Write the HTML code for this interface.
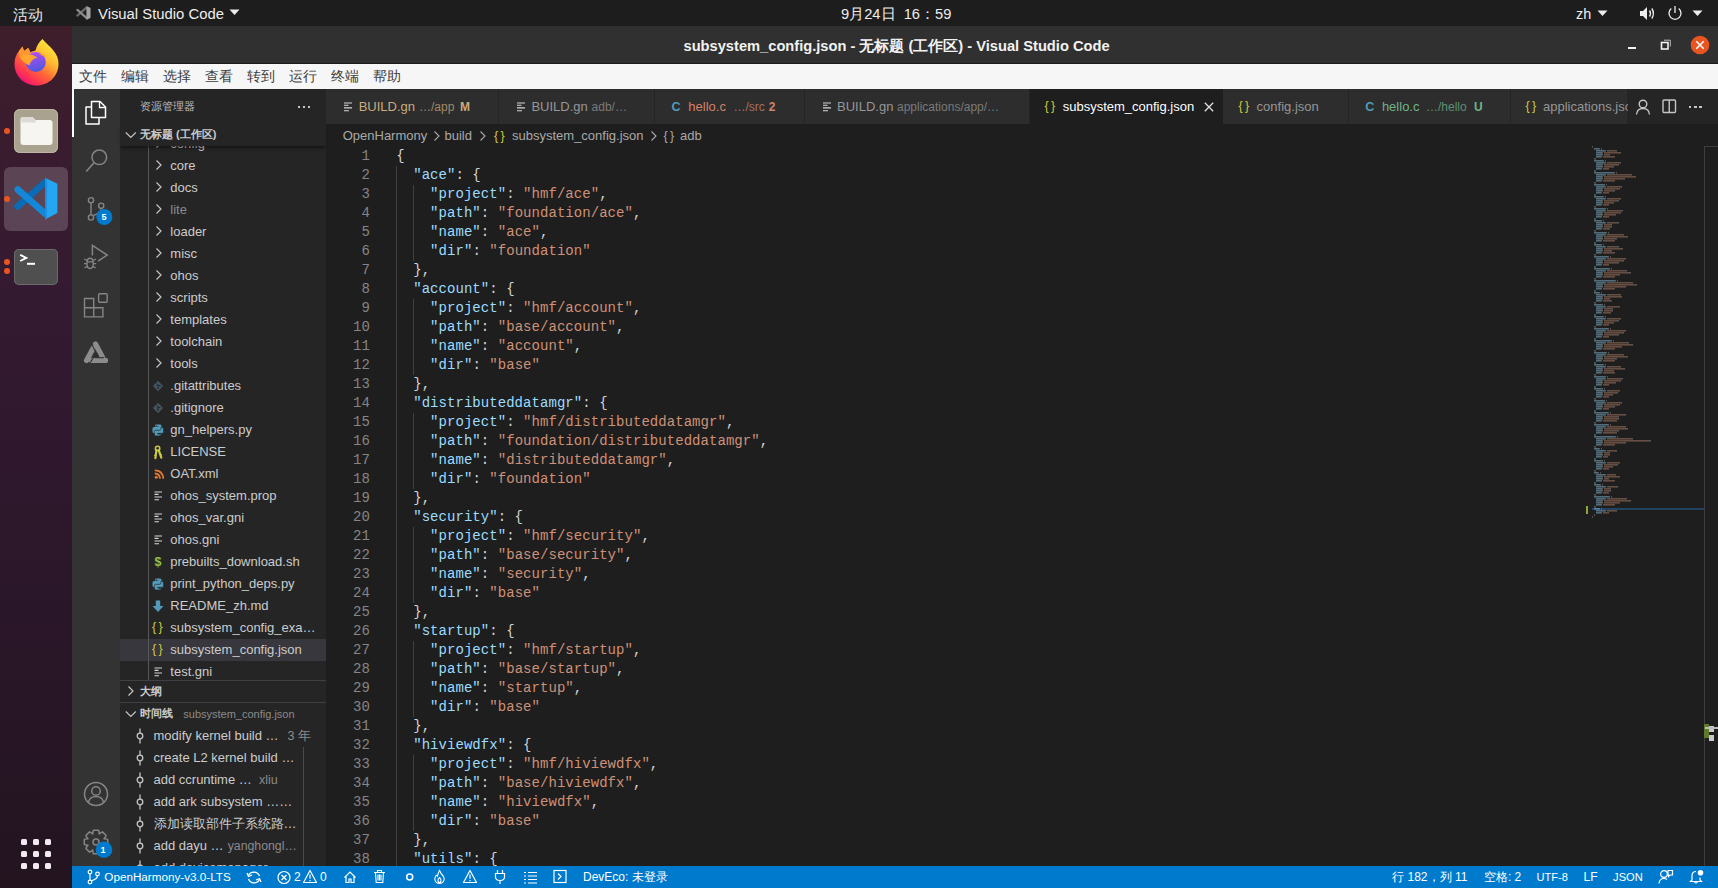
<!DOCTYPE html><html><head><meta charset="utf-8"><style>
*{margin:0;padding:0;box-sizing:border-box}
html,body{width:1718px;height:888px;overflow:hidden;background:#1e1e1e;font-family:"Liberation Sans",sans-serif}
.t{position:absolute;white-space:pre}
.r{position:absolute;display:block}
.mono{font-family:"Liberation Mono",monospace}
</style></head><body><div class="r" style="left:0px;top:0px;width:1718px;height:26px;background:#1d1d1d;"></div>
<div class="t " style="left:12.5px;top:3.5px;font-size:15px;line-height:21px;color:#e8e8e8;font-weight:normal;">活动</div>
<svg class="r" style="left:76px;top:5px;" width="16" height="16" viewBox="0 0 16 16"><g transform="translate(0.2,0.5) scale(0.33)"><path d="M3.5 30.5 L31 6.5" stroke="#6a6a6a" stroke-width="7" stroke-linecap="round"/><path d="M3.8 13.5 L31 37.5" stroke="#8a8a8a" stroke-width="7" stroke-linecap="round"/><path d="M31 1.8 L43.4 7.8 V37 L31 43.6 Z" fill="#a2a2a2"/></g></svg>
<div class="t " style="left:98px;top:3.5px;font-size:14.85px;line-height:21px;color:#ededed;font-weight:normal;">Visual Studio Code</div>
<svg class="r" style="left:229px;top:9px;" width="11" height="7" viewBox="0 0 11 7"><path d="M0.5 0.5 H10.5 L5.5 6 Z" fill="#ededed"/></svg>
<div class="t " style="left:841px;top:3.5px;font-size:14.7px;line-height:21px;color:#ededed;font-weight:normal;letter-spacing:0px">9月24日  16：59</div>
<div class="t " style="left:1576px;top:4.0px;font-size:14.4px;line-height:20px;color:#ededed;font-weight:normal;">zh</div>
<svg class="r" style="left:1597px;top:10px;" width="11" height="7" viewBox="0 0 11 7"><path d="M0.5 0.5 H10.5 L5.5 6 Z" fill="#ededed"/></svg>
<svg class="r" style="left:1639px;top:6px;" width="17" height="15" viewBox="0 0 17 15"><path d="M1 5 H4 L8 1 V14 L4 10 H1 Z" fill="#ededed"/><path d="M10.5 4.5 Q12.5 7.5 10.5 10.5" stroke="#ededed" stroke-width="1.4" fill="none"/><path d="M12.8 2.5 Q16 7.5 12.8 12.5" stroke="#ededed" stroke-width="1.4" fill="none"/></svg>
<svg class="r" style="left:1667px;top:5px;" width="16" height="16" viewBox="0 0 16 16"><path d="M4.3 3.6 A6 6 0 1 0 11.7 3.6" stroke="#ededed" stroke-width="1.3" fill="none"/><path d="M8 1 V8" stroke="#ededed" stroke-width="1.3"/></svg>
<svg class="r" style="left:1692px;top:10px;" width="11" height="7" viewBox="0 0 11 7"><path d="M0.5 0.5 H10.5 L5.5 6 Z" fill="#ededed"/></svg>
<div class="r" style="left:0px;top:26px;width:72px;height:862px;background:linear-gradient(180deg,#3f1e2b 0%,#3a1c2e 12%,#341a31 32%,#2c172b 60%,#231420 100%);"></div>
<div class="r" style="left:72px;top:26px;width:1646px;height:37px;background:#303030;"></div>
<div class="t " style="left:683.5px;top:36.0px;font-size:14.67px;line-height:21px;color:#f2f2f2;font-weight:bold;">subsystem_config.json - 无标题 (工作区) - Visual Studio Code</div>
<div class="r" style="left:1627.5px;top:46.5px;width:8.5px;height:2px;background:#f2f2f2;"></div>
<svg class="r" style="left:1660px;top:39px;" width="12" height="12" viewBox="0 0 12 12"><rect x="1.5" y="3.5" width="6.5" height="6.5" stroke="#f2f2f2" stroke-width="1.6" fill="none"/><path d="M4 1.2 H10.3 V7.5" stroke="#bbb" stroke-width="1" fill="none"/></svg>
<svg class="r" style="left:1690px;top:35px;" width="20" height="20" viewBox="0 0 20 20"><circle cx="10" cy="10" r="9.3" fill="#e95420"/><path d="M6.3 6.3 L13.7 13.7 M13.7 6.3 L6.3 13.7" stroke="#fff" stroke-width="1.6"/></svg>
<div class="r" style="left:72px;top:63px;width:1646px;height:1px;background:#1a1a1a;"></div>
<div class="r" style="left:72px;top:64px;width:1646px;height:25px;background:#f6f6f6;"></div>
<div class="t " style="left:78.5px;top:65.9px;font-size:14px;line-height:20px;color:#3d3d3d;font-weight:normal;">文件</div>
<div class="t " style="left:120.55px;top:65.9px;font-size:14px;line-height:20px;color:#3d3d3d;font-weight:normal;">编辑</div>
<div class="t " style="left:162.6px;top:65.9px;font-size:14px;line-height:20px;color:#3d3d3d;font-weight:normal;">选择</div>
<div class="t " style="left:204.64999999999998px;top:65.9px;font-size:14px;line-height:20px;color:#3d3d3d;font-weight:normal;">查看</div>
<div class="t " style="left:246.7px;top:65.9px;font-size:14px;line-height:20px;color:#3d3d3d;font-weight:normal;">转到</div>
<div class="t " style="left:288.75px;top:65.9px;font-size:14px;line-height:20px;color:#3d3d3d;font-weight:normal;">运行</div>
<div class="t " style="left:330.79999999999995px;top:65.9px;font-size:14px;line-height:20px;color:#3d3d3d;font-weight:normal;">终端</div>
<div class="t " style="left:372.84999999999997px;top:65.9px;font-size:14px;line-height:20px;color:#3d3d3d;font-weight:normal;">帮助</div>
<div class="r" style="left:72px;top:89px;width:48px;height:777px;background:#333333;"></div>
<div class="r" style="left:72px;top:89px;width:2px;height:48px;background:#ffffff;"></div>
<svg class="r" style="left:84px;top:100px;" width="24" height="26" viewBox="0 0 24 26"><path d="M7.5 1.5 H16 L21.5 7 V17.5 H7.5 Z" stroke="#fff" stroke-width="1.5" fill="none" stroke-linejoin="round"/><path d="M15.5 1.5 V7.5 H21.5" stroke="#fff" stroke-width="1.3" fill="none"/><path d="M7.5 7 H2 V24 H15 V17.5" stroke="#fff" stroke-width="1.5" fill="none" stroke-linejoin="round"/></svg>
<svg class="r" style="left:84px;top:148px;" width="26" height="26" viewBox="0 0 26 26"><circle cx="15.3" cy="9.3" r="7.3" stroke="#858585" stroke-width="1.5" fill="none"/><path d="M10 14.8 L2.2 23.5" stroke="#858585" stroke-width="1.6"/></svg>
<svg class="r" style="left:84px;top:195px;" width="26" height="28" viewBox="0 0 26 28"><circle cx="7" cy="5.2" r="2.6" stroke="#858585" stroke-width="1.4" fill="none"/><circle cx="7" cy="22.5" r="2.6" stroke="#858585" stroke-width="1.4" fill="none"/><circle cx="17.2" cy="10.7" r="2.6" stroke="#858585" stroke-width="1.4" fill="none"/><path d="M7 7.8 V19.9 M17.2 13.3 Q17 18 9.5 20.5" stroke="#858585" stroke-width="1.4" fill="none"/></svg>
<svg class="r" style="left:96px;top:209px;" width="17" height="17" viewBox="0 0 17 17"><circle cx="8.3" cy="8" r="8" fill="#007acc"/></svg>
<div class="t " style="left:101.5px;top:210.5px;font-size:9px;line-height:13px;color:#fff;font-weight:bold;">5</div>
<svg class="r" style="left:80px;top:240px;" width="32" height="32" viewBox="0 0 32 32"><path d="M12.4 15.5 V5.4 L27.2 15.1 L18 21.2" stroke="#858585" stroke-width="1.5" fill="none" stroke-linejoin="miter"/><path d="M7 22.5 Q7 18.3 10.1 18.3 Q13.2 18.3 13.2 22.5 V24 Q13.2 28.5 10.1 28.5 Q7 28.5 7 24 Z" stroke="#858585" stroke-width="1.4" fill="none"/><path d="M7 21.8 H13.2 M7 20.5 L4.3 19 M13.2 20.5 L15.9 19 M7 23.6 H4 M13.2 23.6 H16.2 M7.3 26.2 L4.5 28 M12.9 26.2 L15.7 28" stroke="#858585" stroke-width="1.3" fill="none"/></svg>
<svg class="r" style="left:80px;top:290px;" width="32" height="32" viewBox="0 0 32 32"><path d="M4.5 8.5 H13.7 V17.7 H22.9 V26.9 H4.5 Z M4.5 17.7 H13.7 V26.9" stroke="#858585" stroke-width="1.4" fill="none"/><rect x="18.6" y="3.7" width="8.6" height="8.6" rx="1.2" stroke="#858585" stroke-width="1.4" fill="none"/></svg>
<svg class="r" style="left:80px;top:336px;" width="32" height="32" viewBox="0 0 32 32"><path d="M13 12.5 L6.5 24.5" stroke="#8c8c8c" stroke-width="5.2" stroke-linecap="round"/><path d="M15.5 8 L22.3 20.8" stroke="#8c8c8c" stroke-width="5.2" stroke-linecap="round"/><path d="M11.5 24.4 H25.5" stroke="#8c8c8c" stroke-width="5.2" stroke-linecap="round"/><path d="M12.6 10.2 L16.3 17" stroke="#333" stroke-width="1.1"/><path d="M14.5 21.7 H24" stroke="#333" stroke-width="1.1"/><path d="M10.3 26.6 L14.2 20" stroke="#333" stroke-width="1.1"/><path d="M15.2 17.5 L18 17.5 L18.8 21.2 L13.8 21.2 Z" fill="#2e2e2e"/></svg>
<svg class="r" style="left:83px;top:781px;" width="26" height="26" viewBox="0 0 26 26"><circle cx="13" cy="13" r="11.5" stroke="#858585" stroke-width="1.5" fill="none"/><circle cx="13" cy="10" r="4.3" stroke="#858585" stroke-width="1.5" fill="none"/><path d="M5.5 21 Q7 15.5 13 15.5 Q19 15.5 20.5 21" stroke="#858585" stroke-width="1.5" fill="none"/></svg>
<svg class="r" style="left:83px;top:829px;" width="26" height="26" viewBox="0 0 26 26"><path d="M24.71 10.38 L24.71 15.62 L21.04 16.59 L21.22 16.14 L23.13 19.43 L19.43 23.13 L16.14 21.22 L16.59 21.04 L15.62 24.71 L10.38 24.71 L9.41 21.04 L9.86 21.22 L6.57 23.13 L2.87 19.43 L4.78 16.14 L4.96 16.59 L1.29 15.62 L1.29 10.38 L4.96 9.41 L4.78 9.86 L2.87 6.57 L6.57 2.87 L9.86 4.78 L9.41 4.96 L10.38 1.29 L15.62 1.29 L16.59 4.96 L16.14 4.78 L19.43 2.87 L23.13 6.57 L21.22 9.86 L21.04 9.41 Z" stroke="#858585" stroke-width="1.5" fill="none" stroke-linejoin="round"/><circle cx="13" cy="13" r="3" stroke="#858585" stroke-width="1.5" fill="none"/></svg>
<svg class="r" style="left:95px;top:841px;" width="18" height="18" viewBox="0 0 18 18"><circle cx="9" cy="8.7" r="8.3" fill="#007acc"/></svg>
<div class="t " style="left:100.5px;top:843.5px;font-size:9px;line-height:13px;color:#fff;font-weight:bold;">1</div>
<div class="r" style="left:120px;top:89px;width:206px;height:777px;background:#252526;"></div>
<div class="t " style="left:140px;top:98.5px;font-size:11px;line-height:15px;color:#bbbbbb;font-weight:normal;">资源管理器</div>
<div class="r" style="left:297.5px;top:106px;width:2.2px;height:2.2px;background:#c5c5c5;"></div>
<div class="r" style="left:302.5px;top:106px;width:2.2px;height:2.2px;background:#c5c5c5;"></div>
<div class="r" style="left:307.5px;top:106px;width:2.2px;height:2.2px;background:#c5c5c5;"></div>
<div class="r" style="left:120px;top:146px;width:206px;height:534px;overflow:hidden">
<svg class="r" style="left:33.3px;top:-9.3px;" width="12" height="12" viewBox="0 0 12 12"><path d="M3.5 1.5 L8 6 L3.5 10.5" stroke="#c5c5c5" stroke-width="1.2" fill="none"/></svg>
<div class="t " style="left:50.30000000000001px;top:-11.3px;font-size:13px;line-height:18px;color:#cccccc;font-weight:normal;">config</div>
<svg class="r" style="left:33.3px;top:12.7px;" width="12" height="12" viewBox="0 0 12 12"><path d="M3.5 1.5 L8 6 L3.5 10.5" stroke="#c5c5c5" stroke-width="1.2" fill="none"/></svg>
<div class="t " style="left:50.30000000000001px;top:10.7px;font-size:13px;line-height:18px;color:#cccccc;font-weight:normal;">core</div>
<svg class="r" style="left:33.3px;top:34.7px;" width="12" height="12" viewBox="0 0 12 12"><path d="M3.5 1.5 L8 6 L3.5 10.5" stroke="#c5c5c5" stroke-width="1.2" fill="none"/></svg>
<div class="t " style="left:50.30000000000001px;top:32.7px;font-size:13px;line-height:18px;color:#cccccc;font-weight:normal;">docs</div>
<svg class="r" style="left:33.3px;top:56.7px;" width="12" height="12" viewBox="0 0 12 12"><path d="M3.5 1.5 L8 6 L3.5 10.5" stroke="#c5c5c5" stroke-width="1.2" fill="none"/></svg>
<div class="t " style="left:50.30000000000001px;top:54.7px;font-size:13px;line-height:18px;color:#8c8c8c;font-weight:normal;">lite</div>
<svg class="r" style="left:33.3px;top:78.7px;" width="12" height="12" viewBox="0 0 12 12"><path d="M3.5 1.5 L8 6 L3.5 10.5" stroke="#c5c5c5" stroke-width="1.2" fill="none"/></svg>
<div class="t " style="left:50.30000000000001px;top:76.7px;font-size:13px;line-height:18px;color:#cccccc;font-weight:normal;">loader</div>
<svg class="r" style="left:33.3px;top:100.7px;" width="12" height="12" viewBox="0 0 12 12"><path d="M3.5 1.5 L8 6 L3.5 10.5" stroke="#c5c5c5" stroke-width="1.2" fill="none"/></svg>
<div class="t " style="left:50.30000000000001px;top:98.7px;font-size:13px;line-height:18px;color:#cccccc;font-weight:normal;">misc</div>
<svg class="r" style="left:33.3px;top:122.69999999999999px;" width="12" height="12" viewBox="0 0 12 12"><path d="M3.5 1.5 L8 6 L3.5 10.5" stroke="#c5c5c5" stroke-width="1.2" fill="none"/></svg>
<div class="t " style="left:50.30000000000001px;top:120.69999999999999px;font-size:13px;line-height:18px;color:#cccccc;font-weight:normal;">ohos</div>
<svg class="r" style="left:33.3px;top:144.7px;" width="12" height="12" viewBox="0 0 12 12"><path d="M3.5 1.5 L8 6 L3.5 10.5" stroke="#c5c5c5" stroke-width="1.2" fill="none"/></svg>
<div class="t " style="left:50.30000000000001px;top:142.7px;font-size:13px;line-height:18px;color:#cccccc;font-weight:normal;">scripts</div>
<svg class="r" style="left:33.3px;top:166.7px;" width="12" height="12" viewBox="0 0 12 12"><path d="M3.5 1.5 L8 6 L3.5 10.5" stroke="#c5c5c5" stroke-width="1.2" fill="none"/></svg>
<div class="t " style="left:50.30000000000001px;top:164.7px;font-size:13px;line-height:18px;color:#cccccc;font-weight:normal;">templates</div>
<svg class="r" style="left:33.3px;top:188.7px;" width="12" height="12" viewBox="0 0 12 12"><path d="M3.5 1.5 L8 6 L3.5 10.5" stroke="#c5c5c5" stroke-width="1.2" fill="none"/></svg>
<div class="t " style="left:50.30000000000001px;top:186.7px;font-size:13px;line-height:18px;color:#cccccc;font-weight:normal;">toolchain</div>
<svg class="r" style="left:33.3px;top:210.7px;" width="12" height="12" viewBox="0 0 12 12"><path d="M3.5 1.5 L8 6 L3.5 10.5" stroke="#c5c5c5" stroke-width="1.2" fill="none"/></svg>
<div class="t " style="left:50.30000000000001px;top:208.7px;font-size:13px;line-height:18px;color:#cccccc;font-weight:normal;">tools</div>
<svg class="r" style="left:32px;top:233.5px;" width="13" height="12" viewBox="0 0 13 12"><path d="M6 0.8 L11.2 6 L6 11.2 L0.8 6 Z" fill="#41535b"/><path d="M4.5 3.5 L6.5 5.5 M6 5 V9 M6.5 5.5 L8.5 5.5" stroke="#252526" stroke-width="1"/></svg>
<div class="t " style="left:50.30000000000001px;top:230.7px;font-size:13px;line-height:18px;color:#cccccc;font-weight:normal;">.gitattributes</div>
<svg class="r" style="left:32px;top:255.5px;" width="13" height="12" viewBox="0 0 13 12"><path d="M6 0.8 L11.2 6 L6 11.2 L0.8 6 Z" fill="#41535b"/><path d="M4.5 3.5 L6.5 5.5 M6 5 V9 M6.5 5.5 L8.5 5.5" stroke="#252526" stroke-width="1"/></svg>
<div class="t " style="left:50.30000000000001px;top:252.7px;font-size:13px;line-height:18px;color:#cccccc;font-weight:normal;">.gitignore</div>
<svg class="r" style="left:32px;top:277.5px;" width="13" height="13" viewBox="0 0 13 13"><path d="M4.2 0.6 H8 Q9.6 0.6 9.6 2.2 V5 Q9.6 6.2 8.4 6.2 H4.6 Q3.1 6.2 3.1 7.7 V9.2 H1.9 Q0.5 9.2 0.5 7.6 V4.6 Q0.5 3.1 2 3.1 H6.4 V2.5 H3 V2 Q3 0.6 4.2 0.6 Z" fill="#519aba"/><path d="M7.8 11.9 H4 Q2.4 11.9 2.4 10.3 V7.5 Q2.4 6.3 3.6 6.3 H7.4 Q8.9 6.3 8.9 4.8 V3.3 H10.1 Q11.5 3.3 11.5 4.9 V7.9 Q11.5 9.4 10 9.4 H5.6 V10 H9 V10.5 Q9 11.9 7.8 11.9 Z" fill="#519aba" stroke="#252526" stroke-width="0.6"/><circle cx="4.6" cy="1.8" r="0.55" fill="#252526"/><circle cx="7.4" cy="10.7" r="0.55" fill="#252526"/></svg>
<div class="t " style="left:50.30000000000001px;top:274.7px;font-size:13px;line-height:18px;color:#cccccc;font-weight:normal;">gn_helpers.py</div>
<svg class="r" style="left:32px;top:298.5px;" width="13" height="15" viewBox="0 0 13 15"><circle cx="5.6" cy="3.4" r="2.2" stroke="#cbcb41" stroke-width="1.5" fill="none"/><path d="M4.4 5.4 L3.4 13.2 M6.8 5.4 L9.3 12.6" stroke="#cbcb41" stroke-width="2.2" fill="none" stroke-linecap="round"/><path d="M2.2 10.3 H3.6 M8.2 9.6 H9.8" stroke="#cbcb41" stroke-width="1.2"/></svg>
<div class="t " style="left:50.30000000000001px;top:296.7px;font-size:13px;line-height:18px;color:#cccccc;font-weight:normal;">LICENSE</div>
<svg class="r" style="left:33.5px;top:322.5px;" width="11" height="11" viewBox="0 0 11 11"><circle cx="2.2" cy="8.3" r="1.5" fill="#e37933"/><path d="M0.8 4.5 Q5.6 4.5 6 9.8 M0.8 1.3 Q8.8 1.3 9.3 9.8" stroke="#e37933" stroke-width="1.8" fill="none"/></svg>
<div class="t " style="left:50.30000000000001px;top:318.7px;font-size:13px;line-height:18px;color:#cccccc;font-weight:normal;">OAT.xml</div>
<svg class="r" style="left:32px;top:343.5px;" width="13" height="12" viewBox="0 0 13 12"><path d="M2.5 2 H10 M2.5 4.4 H6.5 M2.5 7 H10 M2.5 9.8 H7" stroke="#d4d7d6" stroke-width="1.1"/></svg>
<div class="t " style="left:50.30000000000001px;top:340.7px;font-size:13px;line-height:18px;color:#cccccc;font-weight:normal;">ohos_system.prop</div>
<svg class="r" style="left:32px;top:365.5px;" width="13" height="12" viewBox="0 0 13 12"><path d="M2.5 2 H10 M2.5 4.4 H6.5 M2.5 7 H10 M2.5 9.8 H7" stroke="#d4d7d6" stroke-width="1.1"/></svg>
<div class="t " style="left:50.30000000000001px;top:362.7px;font-size:13px;line-height:18px;color:#cccccc;font-weight:normal;">ohos_var.gni</div>
<svg class="r" style="left:32px;top:387.5px;" width="13" height="12" viewBox="0 0 13 12"><path d="M2.5 2 H10 M2.5 4.4 H6.5 M2.5 7 H10 M2.5 9.8 H7" stroke="#d4d7d6" stroke-width="1.1"/></svg>
<div class="t " style="left:50.30000000000001px;top:384.7px;font-size:13px;line-height:18px;color:#cccccc;font-weight:normal;">ohos.gni</div>
<div class="t " style="left:34.5px;top:406.5px;font-size:12.5px;line-height:18px;color:#8dc149;font-weight:bold;">$</div>
<div class="t " style="left:50.30000000000001px;top:406.7px;font-size:13px;line-height:18px;color:#cccccc;font-weight:normal;">prebuilts_download.sh</div>
<svg class="r" style="left:32px;top:431.5px;" width="13" height="13" viewBox="0 0 13 13"><path d="M4.2 0.6 H8 Q9.6 0.6 9.6 2.2 V5 Q9.6 6.2 8.4 6.2 H4.6 Q3.1 6.2 3.1 7.7 V9.2 H1.9 Q0.5 9.2 0.5 7.6 V4.6 Q0.5 3.1 2 3.1 H6.4 V2.5 H3 V2 Q3 0.6 4.2 0.6 Z" fill="#519aba"/><path d="M7.8 11.9 H4 Q2.4 11.9 2.4 10.3 V7.5 Q2.4 6.3 3.6 6.3 H7.4 Q8.9 6.3 8.9 4.8 V3.3 H10.1 Q11.5 3.3 11.5 4.9 V7.9 Q11.5 9.4 10 9.4 H5.6 V10 H9 V10.5 Q9 11.9 7.8 11.9 Z" fill="#519aba" stroke="#252526" stroke-width="0.6"/><circle cx="4.6" cy="1.8" r="0.55" fill="#252526"/><circle cx="7.4" cy="10.7" r="0.55" fill="#252526"/></svg>
<div class="t " style="left:50.30000000000001px;top:428.7px;font-size:13px;line-height:18px;color:#cccccc;font-weight:normal;">print_python_deps.py</div>
<svg class="r" style="left:32px;top:453.5px;" width="13" height="13" viewBox="0 0 13 13"><path d="M3.8 0.5 H8.2 V6 H11.5 L6 12 L0.5 6 H3.8 Z" fill="#519aba"/></svg>
<div class="t " style="left:50.30000000000001px;top:450.7px;font-size:13px;line-height:18px;color:#cccccc;font-weight:normal;">README_zh.md</div>
<div class="t " style="left:32px;top:472.0px;font-size:12.5px;line-height:18px;color:#cbcb41;font-weight:normal;letter-spacing:-0.6px">{ }</div>
<div class="t " style="left:50.30000000000001px;top:472.7px;font-size:13px;line-height:18px;color:#cccccc;font-weight:normal;">subsystem_config_exa…</div>
<div class="r" style="left:0px;top:492.5px;width:206px;height:22px;background:#37373d;"></div>
<div class="t " style="left:32px;top:494.0px;font-size:12.5px;line-height:18px;color:#cbcb41;font-weight:normal;letter-spacing:-0.6px">{ }</div>
<div class="t " style="left:50.30000000000001px;top:494.7px;font-size:13px;line-height:18px;color:#cccccc;font-weight:normal;">subsystem_config.json</div>
<svg class="r" style="left:32px;top:519.5px;" width="13" height="12" viewBox="0 0 13 12"><path d="M2.5 2 H10 M2.5 4.4 H6.5 M2.5 7 H10 M2.5 9.8 H7" stroke="#d4d7d6" stroke-width="1.1"/></svg>
<div class="t " style="left:50.30000000000001px;top:516.7px;font-size:13px;line-height:18px;color:#cccccc;font-weight:normal;">test.gni</div>
</div>
<div class="r" style="left:148px;top:146px;width:1px;height:534px;background:#585858;"></div>
<div class="r" style="left:120px;top:124px;width:206px;height:22px;background:#252526;box-shadow:0 3px 3px -1px rgba(0,0,0,0.45)"></div>
<svg class="r" style="left:123.5px;top:128.5px;" width="14" height="12" viewBox="0 0 14 12"><path d="M1.8 3.5 L6.8 8.5 L11.8 3.5" stroke="#c5c5c5" stroke-width="1.2" fill="none"/></svg>
<div class="t " style="left:140px;top:127.0px;font-size:11px;line-height:15px;color:#cccccc;font-weight:bold;">无标题 (工作区)</div>
<div class="r" style="left:120px;top:680px;width:206px;height:1px;background:#3f3f46;"></div>
<svg class="r" style="left:124.5px;top:685px;" width="12" height="12" viewBox="0 0 12 12"><path d="M3.5 1.5 L8 6 L3.5 10.5" stroke="#c5c5c5" stroke-width="1.2" fill="none"/></svg>
<div class="t " style="left:140.3px;top:683.5px;font-size:11px;line-height:15px;color:#cccccc;font-weight:bold;">大纲</div>
<div class="r" style="left:120px;top:702px;width:206px;height:1px;background:#3f3f46;"></div>
<svg class="r" style="left:123.5px;top:707.5px;" width="14" height="12" viewBox="0 0 14 12"><path d="M1.8 3.5 L6.8 8.5 L11.8 3.5" stroke="#c5c5c5" stroke-width="1.2" fill="none"/></svg>
<div class="t " style="left:140px;top:706.0px;font-size:11px;line-height:15px;color:#cccccc;font-weight:bold;">时间线</div>
<div class="t " style="left:183.3px;top:707.0px;font-size:11px;line-height:15px;color:#8b8b8b;font-weight:normal;">subsystem_config.json</div>
<div class="r" style="left:120px;top:724px;width:206px;height:142px;overflow:hidden">
<svg class="r" style="left:16px;top:3.5px;" width="9" height="16" viewBox="0 0 9 16"><circle cx="4" cy="8" r="2.8" stroke="#c5c5c5" stroke-width="1.3" fill="none"/><path d="M4 0.5 V5.2 M4 10.8 V15.5" stroke="#c5c5c5" stroke-width="1.3"/></svg>
<div class="t " style="left:33.5px;top:2.5px;font-size:13px;line-height:18px;color:#cccccc;font-weight:normal;">modify kernel build …</div>
<svg class="r" style="left:16px;top:25.5px;" width="9" height="16" viewBox="0 0 9 16"><circle cx="4" cy="8" r="2.8" stroke="#c5c5c5" stroke-width="1.3" fill="none"/><path d="M4 0.5 V5.2 M4 10.8 V15.5" stroke="#c5c5c5" stroke-width="1.3"/></svg>
<div class="t " style="left:33.5px;top:24.5px;font-size:13px;line-height:18px;color:#cccccc;font-weight:normal;">create L2 kernel build …</div>
<svg class="r" style="left:16px;top:47.5px;" width="9" height="16" viewBox="0 0 9 16"><circle cx="4" cy="8" r="2.8" stroke="#c5c5c5" stroke-width="1.3" fill="none"/><path d="M4 0.5 V5.2 M4 10.8 V15.5" stroke="#c5c5c5" stroke-width="1.3"/></svg>
<div class="t " style="left:33.5px;top:46.5px;font-size:13px;line-height:18px;color:#cccccc;font-weight:normal;">add ccruntime …</div>
<svg class="r" style="left:16px;top:69.5px;" width="9" height="16" viewBox="0 0 9 16"><circle cx="4" cy="8" r="2.8" stroke="#c5c5c5" stroke-width="1.3" fill="none"/><path d="M4 0.5 V5.2 M4 10.8 V15.5" stroke="#c5c5c5" stroke-width="1.3"/></svg>
<div class="t " style="left:33.5px;top:68.5px;font-size:13px;line-height:18px;color:#cccccc;font-weight:normal;">add ark subsystem ……</div>
<svg class="r" style="left:16px;top:91.5px;" width="9" height="16" viewBox="0 0 9 16"><circle cx="4" cy="8" r="2.8" stroke="#c5c5c5" stroke-width="1.3" fill="none"/><path d="M4 0.5 V5.2 M4 10.8 V15.5" stroke="#c5c5c5" stroke-width="1.3"/></svg>
<div class="t " style="left:33.5px;top:90.5px;font-size:13px;line-height:18px;color:#cccccc;font-weight:normal;">添加读取部件子系统路…</div>
<svg class="r" style="left:16px;top:113.5px;" width="9" height="16" viewBox="0 0 9 16"><circle cx="4" cy="8" r="2.8" stroke="#c5c5c5" stroke-width="1.3" fill="none"/><path d="M4 0.5 V5.2 M4 10.8 V15.5" stroke="#c5c5c5" stroke-width="1.3"/></svg>
<div class="t " style="left:33.5px;top:112.5px;font-size:13px;line-height:18px;color:#cccccc;font-weight:normal;">add dayu …</div>
<svg class="r" style="left:16px;top:135.5px;" width="9" height="16" viewBox="0 0 9 16"><circle cx="4" cy="8" r="2.8" stroke="#c5c5c5" stroke-width="1.3" fill="none"/><path d="M4 0.5 V5.2 M4 10.8 V15.5" stroke="#c5c5c5" stroke-width="1.3"/></svg>
<div class="t " style="left:33.5px;top:134.5px;font-size:13px;line-height:18px;color:#cccccc;font-weight:normal;">add devicemanager…</div>
</div>
<div class="t " style="left:287.5px;top:727.0px;font-size:12.5px;line-height:18px;color:#8b8b8b;font-weight:normal;">3 年</div>
<div class="t " style="left:259px;top:771.3px;font-size:12.5px;line-height:18px;color:#8b8b8b;font-weight:normal;">xliu</div>
<div class="t " style="left:227.7px;top:837.9px;font-size:12.3px;line-height:17px;color:#8b8b8b;font-weight:normal;">yanghongl…</div>
<div class="r" style="left:303px;top:747px;width:1px;height:119px;background:#4a4a4a;"></div>
<div class="r" style="left:326px;top:89px;width:1392px;height:35px;background:#252526;"></div>
<div class="r" style="left:326px;top:89px;width:172px;height:35px;background:#2d2d2d;"></div>
<div class="r" style="left:499px;top:89px;width:155px;height:35px;background:#2d2d2d;"></div>
<div class="r" style="left:655px;top:89px;width:149px;height:35px;background:#2d2d2d;"></div>
<div class="r" style="left:805px;top:89px;width:224px;height:35px;background:#2d2d2d;"></div>
<div class="r" style="left:1030px;top:89px;width:193px;height:35px;background:#1e1e1e;"></div>
<div class="r" style="left:1223px;top:89px;width:125px;height:35px;background:#2d2d2d;"></div>
<div class="r" style="left:1349px;top:89px;width:161px;height:35px;background:#2d2d2d;"></div>
<div class="r" style="left:1511px;top:89px;width:116px;height:35px;background:#2d2d2d;"></div>
<svg class="r" style="left:343px;top:100.6px;" width="11" height="12" viewBox="0 0 11 12"><path d="M1 2 H9 M1 4.3 H5.5 M1 6.9 H9 M1 9.8 H6" stroke="#d4d7d6" stroke-width="1.1"/></svg>
<div class="t " style="left:358.7px;top:97.6px;font-size:13px;line-height:18px;color:#c9ab7e;font-weight:normal;">BUILD.gn</div>
<div class="t " style="left:419px;top:98.6px;font-size:12px;line-height:17px;color:#a08a68;font-weight:normal;">…/app</div>
<div class="t " style="left:460px;top:98.89999999999999px;font-size:12px;line-height:17px;color:#c9ab7e;font-weight:bold;">M</div>
<svg class="r" style="left:516px;top:100.6px;" width="11" height="12" viewBox="0 0 11 12"><path d="M1 2 H9 M1 4.3 H5.5 M1 6.9 H9 M1 9.8 H6" stroke="#d4d7d6" stroke-width="1.1"/></svg>
<div class="t " style="left:531.4px;top:97.6px;font-size:13px;line-height:18px;color:#969696;font-weight:normal;">BUILD.gn</div>
<div class="t " style="left:591.6px;top:98.6px;font-size:12px;line-height:17px;color:#7a7a7a;font-weight:normal;">adb/…</div>
<div class="t " style="left:671.5px;top:97.6px;font-size:12.5px;line-height:18px;color:#519aba;font-weight:bold;">C</div>
<div class="t " style="left:688.3px;top:97.6px;font-size:13px;line-height:18px;color:#d4816a;font-weight:normal;">hello.c</div>
<div class="t " style="left:733.5px;top:98.6px;font-size:12px;line-height:17px;color:#a8705f;font-weight:normal;">…/src</div>
<div class="t " style="left:768.8px;top:98.89999999999999px;font-size:12px;line-height:17px;color:#d4816a;font-weight:bold;">2</div>
<svg class="r" style="left:822px;top:100.6px;" width="11" height="12" viewBox="0 0 11 12"><path d="M1 2 H9 M1 4.3 H5.5 M1 6.9 H9 M1 9.8 H6" stroke="#d4d7d6" stroke-width="1.1"/></svg>
<div class="t " style="left:837px;top:97.6px;font-size:13px;line-height:18px;color:#969696;font-weight:normal;">BUILD.gn</div>
<div class="t " style="left:897px;top:98.6px;font-size:12px;line-height:17px;color:#7a7a7a;font-weight:normal;">applications/app/…</div>
<div class="t " style="left:1044.5px;top:97.1px;font-size:12.5px;line-height:18px;color:#cbcb41;font-weight:normal;letter-spacing:-0.6px">{ }</div>
<div class="t " style="left:1062.7px;top:97.6px;font-size:13px;line-height:18px;color:#ffffff;font-weight:normal;">subsystem_config.json</div>
<svg class="r" style="left:1203px;top:100.6px;" width="12" height="12" viewBox="0 0 12 12"><path d="M1.8 1.8 L10.2 10.2 M10.2 1.8 L1.8 10.2" stroke="#e0e0e0" stroke-width="1.3"/></svg>
<div class="t " style="left:1238.5px;top:97.1px;font-size:12.5px;line-height:18px;color:#cbcb41;font-weight:normal;letter-spacing:-0.6px">{ }</div>
<div class="t " style="left:1256.6px;top:97.6px;font-size:13px;line-height:18px;color:#969696;font-weight:normal;">config.json</div>
<div class="t " style="left:1365.2px;top:97.6px;font-size:12.5px;line-height:18px;color:#519aba;font-weight:bold;">C</div>
<div class="t " style="left:1381.9px;top:97.6px;font-size:13px;line-height:18px;color:#6fb48a;font-weight:normal;">hello.c</div>
<div class="t " style="left:1426px;top:98.6px;font-size:12px;line-height:17px;color:#5f8f72;font-weight:normal;">…/hello</div>
<div class="t " style="left:1474px;top:98.89999999999999px;font-size:12px;line-height:17px;color:#6fb48a;font-weight:bold;">U</div>
<div class="r" style="left:1511px;top:89px;width:117px;height:35px;overflow:hidden">
<div class="t " style="left:14.5px;top:8.099999999999994px;font-size:12.5px;line-height:18px;color:#cbcb41;font-weight:normal;letter-spacing:-0.6px">{ }</div>
<div class="t " style="left:32px;top:8.599999999999994px;font-size:13px;line-height:18px;color:#969696;font-weight:normal;">applications.json</div>
</div>
<svg class="r" style="left:1634px;top:98px;" width="18" height="18" viewBox="0 0 18 18"><circle cx="9" cy="6" r="3.8" stroke="#c5c5c5" stroke-width="1.4" fill="none"/><path d="M2.5 16.5 Q3 10.5 9 10.5 Q15 10.5 15.5 16.5" stroke="#c5c5c5" stroke-width="1.4" fill="none"/></svg>
<svg class="r" style="left:1661px;top:98px;" width="17" height="17" viewBox="0 0 17 17"><rect x="2" y="2" width="12.5" height="12.5" rx="1" stroke="#c5c5c5" stroke-width="1.4" fill="none"/><path d="M8.25 2 V14.5" stroke="#c5c5c5" stroke-width="1.4"/></svg>
<div class="r" style="left:1689.0px;top:106px;width:2.4px;height:2.4px;background:#c5c5c5;"></div>
<div class="r" style="left:1694.2px;top:106px;width:2.4px;height:2.4px;background:#c5c5c5;"></div>
<div class="r" style="left:1699.4px;top:106px;width:2.4px;height:2.4px;background:#c5c5c5;"></div>
<div class="t " style="left:342.7px;top:127.0px;font-size:13px;line-height:18px;color:#a9a9a9;font-weight:normal;">OpenHarmony</div>
<svg class="r" style="left:433px;top:130px;" width="9" height="12" viewBox="0 0 9 12"><path d="M1.5 1.5 L6 6 L1.5 10.5" stroke="#a9a9a9" stroke-width="1.1" fill="none"/></svg>
<div class="t " style="left:444.5px;top:127.0px;font-size:13px;line-height:18px;color:#a9a9a9;font-weight:normal;">build</div>
<svg class="r" style="left:479px;top:130px;" width="9" height="12" viewBox="0 0 9 12"><path d="M1.5 1.5 L6 6 L1.5 10.5" stroke="#a9a9a9" stroke-width="1.1" fill="none"/></svg>
<div class="t " style="left:494px;top:126.5px;font-size:12.5px;line-height:18px;color:#cbcb41;font-weight:normal;letter-spacing:-0.6px">{ }</div>
<div class="t " style="left:512px;top:127.0px;font-size:13px;line-height:18px;color:#a9a9a9;font-weight:normal;">subsystem_config.json</div>
<svg class="r" style="left:650.4px;top:130px;" width="9" height="12" viewBox="0 0 9 12"><path d="M1.5 1.5 L6 6 L1.5 10.5" stroke="#a9a9a9" stroke-width="1.1" fill="none"/></svg>
<div class="t " style="left:663.5px;top:126.5px;font-size:12.5px;line-height:18px;color:#a9a9a9;font-weight:normal;letter-spacing:-0.6px">{ }</div>
<div class="t " style="left:680px;top:127.0px;font-size:13px;line-height:18px;color:#a9a9a9;font-weight:normal;">adb</div>
<div class="r" style="left:326px;top:146px;width:1266px;height:720px;overflow:hidden">
<div class="t mono" style="left:44px;top:0.5px;width:43.80000000000001px;text-align:right;font-size:14px;line-height:19px;color:#858585;left:0px;width:43.8px">1</div>
<div class="t mono" style="left:70.30000000000001px;top:0.5px;font-size:14px;line-height:19px;color:#d4d4d4;letter-spacing:0.050px">{</div>
<div class="t mono" style="left:44px;top:19.5px;width:43.80000000000001px;text-align:right;font-size:14px;line-height:19px;color:#858585;left:0px;width:43.8px">2</div>
<div class="t mono" style="left:70.30000000000001px;top:19.5px;font-size:14px;line-height:19px;color:#d4d4d4;letter-spacing:0.050px">  <span style="color:#9cdcfe">&quot;ace&quot;</span>: {</div>
<div class="r" style="left:70.0px;top:19.5px;width:1px;height:19px;background:#404040;"></div>
<div class="t mono" style="left:44px;top:38.5px;width:43.80000000000001px;text-align:right;font-size:14px;line-height:19px;color:#858585;left:0px;width:43.8px">3</div>
<div class="t mono" style="left:70.30000000000001px;top:38.5px;font-size:14px;line-height:19px;color:#d4d4d4;letter-spacing:0.050px">    <span style="color:#9cdcfe">&quot;project&quot;</span>: <span style="color:#ce9178">&quot;hmf/ace&quot;</span>,</div>
<div class="r" style="left:70.0px;top:38.5px;width:1px;height:19px;background:#404040;"></div>
<div class="r" style="left:86.9px;top:38.5px;width:1px;height:19px;background:#404040;"></div>
<div class="t mono" style="left:44px;top:57.5px;width:43.80000000000001px;text-align:right;font-size:14px;line-height:19px;color:#858585;left:0px;width:43.8px">4</div>
<div class="t mono" style="left:70.30000000000001px;top:57.5px;font-size:14px;line-height:19px;color:#d4d4d4;letter-spacing:0.050px">    <span style="color:#9cdcfe">&quot;path&quot;</span>: <span style="color:#ce9178">&quot;foundation/ace&quot;</span>,</div>
<div class="r" style="left:70.0px;top:57.5px;width:1px;height:19px;background:#404040;"></div>
<div class="r" style="left:86.9px;top:57.5px;width:1px;height:19px;background:#404040;"></div>
<div class="t mono" style="left:44px;top:76.5px;width:43.80000000000001px;text-align:right;font-size:14px;line-height:19px;color:#858585;left:0px;width:43.8px">5</div>
<div class="t mono" style="left:70.30000000000001px;top:76.5px;font-size:14px;line-height:19px;color:#d4d4d4;letter-spacing:0.050px">    <span style="color:#9cdcfe">&quot;name&quot;</span>: <span style="color:#ce9178">&quot;ace&quot;</span>,</div>
<div class="r" style="left:70.0px;top:76.5px;width:1px;height:19px;background:#404040;"></div>
<div class="r" style="left:86.9px;top:76.5px;width:1px;height:19px;background:#404040;"></div>
<div class="t mono" style="left:44px;top:95.5px;width:43.80000000000001px;text-align:right;font-size:14px;line-height:19px;color:#858585;left:0px;width:43.8px">6</div>
<div class="t mono" style="left:70.30000000000001px;top:95.5px;font-size:14px;line-height:19px;color:#d4d4d4;letter-spacing:0.050px">    <span style="color:#9cdcfe">&quot;dir&quot;</span>: <span style="color:#ce9178">&quot;foundation&quot;</span></div>
<div class="r" style="left:70.0px;top:95.5px;width:1px;height:19px;background:#404040;"></div>
<div class="r" style="left:86.9px;top:95.5px;width:1px;height:19px;background:#404040;"></div>
<div class="t mono" style="left:44px;top:114.5px;width:43.80000000000001px;text-align:right;font-size:14px;line-height:19px;color:#858585;left:0px;width:43.8px">7</div>
<div class="t mono" style="left:70.30000000000001px;top:114.5px;font-size:14px;line-height:19px;color:#d4d4d4;letter-spacing:0.050px">  },</div>
<div class="r" style="left:70.0px;top:114.5px;width:1px;height:19px;background:#404040;"></div>
<div class="t mono" style="left:44px;top:133.5px;width:43.80000000000001px;text-align:right;font-size:14px;line-height:19px;color:#858585;left:0px;width:43.8px">8</div>
<div class="t mono" style="left:70.30000000000001px;top:133.5px;font-size:14px;line-height:19px;color:#d4d4d4;letter-spacing:0.050px">  <span style="color:#9cdcfe">&quot;account&quot;</span>: {</div>
<div class="r" style="left:70.0px;top:133.5px;width:1px;height:19px;background:#404040;"></div>
<div class="t mono" style="left:44px;top:152.5px;width:43.80000000000001px;text-align:right;font-size:14px;line-height:19px;color:#858585;left:0px;width:43.8px">9</div>
<div class="t mono" style="left:70.30000000000001px;top:152.5px;font-size:14px;line-height:19px;color:#d4d4d4;letter-spacing:0.050px">    <span style="color:#9cdcfe">&quot;project&quot;</span>: <span style="color:#ce9178">&quot;hmf/account&quot;</span>,</div>
<div class="r" style="left:70.0px;top:152.5px;width:1px;height:19px;background:#404040;"></div>
<div class="r" style="left:86.9px;top:152.5px;width:1px;height:19px;background:#404040;"></div>
<div class="t mono" style="left:44px;top:171.5px;width:43.80000000000001px;text-align:right;font-size:14px;line-height:19px;color:#858585;left:0px;width:43.8px">10</div>
<div class="t mono" style="left:70.30000000000001px;top:171.5px;font-size:14px;line-height:19px;color:#d4d4d4;letter-spacing:0.050px">    <span style="color:#9cdcfe">&quot;path&quot;</span>: <span style="color:#ce9178">&quot;base/account&quot;</span>,</div>
<div class="r" style="left:70.0px;top:171.5px;width:1px;height:19px;background:#404040;"></div>
<div class="r" style="left:86.9px;top:171.5px;width:1px;height:19px;background:#404040;"></div>
<div class="t mono" style="left:44px;top:190.5px;width:43.80000000000001px;text-align:right;font-size:14px;line-height:19px;color:#858585;left:0px;width:43.8px">11</div>
<div class="t mono" style="left:70.30000000000001px;top:190.5px;font-size:14px;line-height:19px;color:#d4d4d4;letter-spacing:0.050px">    <span style="color:#9cdcfe">&quot;name&quot;</span>: <span style="color:#ce9178">&quot;account&quot;</span>,</div>
<div class="r" style="left:70.0px;top:190.5px;width:1px;height:19px;background:#404040;"></div>
<div class="r" style="left:86.9px;top:190.5px;width:1px;height:19px;background:#404040;"></div>
<div class="t mono" style="left:44px;top:209.5px;width:43.80000000000001px;text-align:right;font-size:14px;line-height:19px;color:#858585;left:0px;width:43.8px">12</div>
<div class="t mono" style="left:70.30000000000001px;top:209.5px;font-size:14px;line-height:19px;color:#d4d4d4;letter-spacing:0.050px">    <span style="color:#9cdcfe">&quot;dir&quot;</span>: <span style="color:#ce9178">&quot;base&quot;</span></div>
<div class="r" style="left:70.0px;top:209.5px;width:1px;height:19px;background:#404040;"></div>
<div class="r" style="left:86.9px;top:209.5px;width:1px;height:19px;background:#404040;"></div>
<div class="t mono" style="left:44px;top:228.5px;width:43.80000000000001px;text-align:right;font-size:14px;line-height:19px;color:#858585;left:0px;width:43.8px">13</div>
<div class="t mono" style="left:70.30000000000001px;top:228.5px;font-size:14px;line-height:19px;color:#d4d4d4;letter-spacing:0.050px">  },</div>
<div class="r" style="left:70.0px;top:228.5px;width:1px;height:19px;background:#404040;"></div>
<div class="t mono" style="left:44px;top:247.5px;width:43.80000000000001px;text-align:right;font-size:14px;line-height:19px;color:#858585;left:0px;width:43.8px">14</div>
<div class="t mono" style="left:70.30000000000001px;top:247.5px;font-size:14px;line-height:19px;color:#d4d4d4;letter-spacing:0.050px">  <span style="color:#9cdcfe">&quot;distributeddatamgr&quot;</span>: {</div>
<div class="r" style="left:70.0px;top:247.5px;width:1px;height:19px;background:#404040;"></div>
<div class="t mono" style="left:44px;top:266.5px;width:43.80000000000001px;text-align:right;font-size:14px;line-height:19px;color:#858585;left:0px;width:43.8px">15</div>
<div class="t mono" style="left:70.30000000000001px;top:266.5px;font-size:14px;line-height:19px;color:#d4d4d4;letter-spacing:0.050px">    <span style="color:#9cdcfe">&quot;project&quot;</span>: <span style="color:#ce9178">&quot;hmf/distributeddatamgr&quot;</span>,</div>
<div class="r" style="left:70.0px;top:266.5px;width:1px;height:19px;background:#404040;"></div>
<div class="r" style="left:86.9px;top:266.5px;width:1px;height:19px;background:#404040;"></div>
<div class="t mono" style="left:44px;top:285.5px;width:43.80000000000001px;text-align:right;font-size:14px;line-height:19px;color:#858585;left:0px;width:43.8px">16</div>
<div class="t mono" style="left:70.30000000000001px;top:285.5px;font-size:14px;line-height:19px;color:#d4d4d4;letter-spacing:0.050px">    <span style="color:#9cdcfe">&quot;path&quot;</span>: <span style="color:#ce9178">&quot;foundation/distributeddatamgr&quot;</span>,</div>
<div class="r" style="left:70.0px;top:285.5px;width:1px;height:19px;background:#404040;"></div>
<div class="r" style="left:86.9px;top:285.5px;width:1px;height:19px;background:#404040;"></div>
<div class="t mono" style="left:44px;top:304.5px;width:43.80000000000001px;text-align:right;font-size:14px;line-height:19px;color:#858585;left:0px;width:43.8px">17</div>
<div class="t mono" style="left:70.30000000000001px;top:304.5px;font-size:14px;line-height:19px;color:#d4d4d4;letter-spacing:0.050px">    <span style="color:#9cdcfe">&quot;name&quot;</span>: <span style="color:#ce9178">&quot;distributeddatamgr&quot;</span>,</div>
<div class="r" style="left:70.0px;top:304.5px;width:1px;height:19px;background:#404040;"></div>
<div class="r" style="left:86.9px;top:304.5px;width:1px;height:19px;background:#404040;"></div>
<div class="t mono" style="left:44px;top:323.5px;width:43.80000000000001px;text-align:right;font-size:14px;line-height:19px;color:#858585;left:0px;width:43.8px">18</div>
<div class="t mono" style="left:70.30000000000001px;top:323.5px;font-size:14px;line-height:19px;color:#d4d4d4;letter-spacing:0.050px">    <span style="color:#9cdcfe">&quot;dir&quot;</span>: <span style="color:#ce9178">&quot;foundation&quot;</span></div>
<div class="r" style="left:70.0px;top:323.5px;width:1px;height:19px;background:#404040;"></div>
<div class="r" style="left:86.9px;top:323.5px;width:1px;height:19px;background:#404040;"></div>
<div class="t mono" style="left:44px;top:342.5px;width:43.80000000000001px;text-align:right;font-size:14px;line-height:19px;color:#858585;left:0px;width:43.8px">19</div>
<div class="t mono" style="left:70.30000000000001px;top:342.5px;font-size:14px;line-height:19px;color:#d4d4d4;letter-spacing:0.050px">  },</div>
<div class="r" style="left:70.0px;top:342.5px;width:1px;height:19px;background:#404040;"></div>
<div class="t mono" style="left:44px;top:361.5px;width:43.80000000000001px;text-align:right;font-size:14px;line-height:19px;color:#858585;left:0px;width:43.8px">20</div>
<div class="t mono" style="left:70.30000000000001px;top:361.5px;font-size:14px;line-height:19px;color:#d4d4d4;letter-spacing:0.050px">  <span style="color:#9cdcfe">&quot;security&quot;</span>: {</div>
<div class="r" style="left:70.0px;top:361.5px;width:1px;height:19px;background:#404040;"></div>
<div class="t mono" style="left:44px;top:380.5px;width:43.80000000000001px;text-align:right;font-size:14px;line-height:19px;color:#858585;left:0px;width:43.8px">21</div>
<div class="t mono" style="left:70.30000000000001px;top:380.5px;font-size:14px;line-height:19px;color:#d4d4d4;letter-spacing:0.050px">    <span style="color:#9cdcfe">&quot;project&quot;</span>: <span style="color:#ce9178">&quot;hmf/security&quot;</span>,</div>
<div class="r" style="left:70.0px;top:380.5px;width:1px;height:19px;background:#404040;"></div>
<div class="r" style="left:86.9px;top:380.5px;width:1px;height:19px;background:#404040;"></div>
<div class="t mono" style="left:44px;top:399.5px;width:43.80000000000001px;text-align:right;font-size:14px;line-height:19px;color:#858585;left:0px;width:43.8px">22</div>
<div class="t mono" style="left:70.30000000000001px;top:399.5px;font-size:14px;line-height:19px;color:#d4d4d4;letter-spacing:0.050px">    <span style="color:#9cdcfe">&quot;path&quot;</span>: <span style="color:#ce9178">&quot;base/security&quot;</span>,</div>
<div class="r" style="left:70.0px;top:399.5px;width:1px;height:19px;background:#404040;"></div>
<div class="r" style="left:86.9px;top:399.5px;width:1px;height:19px;background:#404040;"></div>
<div class="t mono" style="left:44px;top:418.5px;width:43.80000000000001px;text-align:right;font-size:14px;line-height:19px;color:#858585;left:0px;width:43.8px">23</div>
<div class="t mono" style="left:70.30000000000001px;top:418.5px;font-size:14px;line-height:19px;color:#d4d4d4;letter-spacing:0.050px">    <span style="color:#9cdcfe">&quot;name&quot;</span>: <span style="color:#ce9178">&quot;security&quot;</span>,</div>
<div class="r" style="left:70.0px;top:418.5px;width:1px;height:19px;background:#404040;"></div>
<div class="r" style="left:86.9px;top:418.5px;width:1px;height:19px;background:#404040;"></div>
<div class="t mono" style="left:44px;top:437.5px;width:43.80000000000001px;text-align:right;font-size:14px;line-height:19px;color:#858585;left:0px;width:43.8px">24</div>
<div class="t mono" style="left:70.30000000000001px;top:437.5px;font-size:14px;line-height:19px;color:#d4d4d4;letter-spacing:0.050px">    <span style="color:#9cdcfe">&quot;dir&quot;</span>: <span style="color:#ce9178">&quot;base&quot;</span></div>
<div class="r" style="left:70.0px;top:437.5px;width:1px;height:19px;background:#404040;"></div>
<div class="r" style="left:86.9px;top:437.5px;width:1px;height:19px;background:#404040;"></div>
<div class="t mono" style="left:44px;top:456.5px;width:43.80000000000001px;text-align:right;font-size:14px;line-height:19px;color:#858585;left:0px;width:43.8px">25</div>
<div class="t mono" style="left:70.30000000000001px;top:456.5px;font-size:14px;line-height:19px;color:#d4d4d4;letter-spacing:0.050px">  },</div>
<div class="r" style="left:70.0px;top:456.5px;width:1px;height:19px;background:#404040;"></div>
<div class="t mono" style="left:44px;top:475.5px;width:43.80000000000001px;text-align:right;font-size:14px;line-height:19px;color:#858585;left:0px;width:43.8px">26</div>
<div class="t mono" style="left:70.30000000000001px;top:475.5px;font-size:14px;line-height:19px;color:#d4d4d4;letter-spacing:0.050px">  <span style="color:#9cdcfe">&quot;startup&quot;</span>: {</div>
<div class="r" style="left:70.0px;top:475.5px;width:1px;height:19px;background:#404040;"></div>
<div class="t mono" style="left:44px;top:494.5px;width:43.80000000000001px;text-align:right;font-size:14px;line-height:19px;color:#858585;left:0px;width:43.8px">27</div>
<div class="t mono" style="left:70.30000000000001px;top:494.5px;font-size:14px;line-height:19px;color:#d4d4d4;letter-spacing:0.050px">    <span style="color:#9cdcfe">&quot;project&quot;</span>: <span style="color:#ce9178">&quot;hmf/startup&quot;</span>,</div>
<div class="r" style="left:70.0px;top:494.5px;width:1px;height:19px;background:#404040;"></div>
<div class="r" style="left:86.9px;top:494.5px;width:1px;height:19px;background:#404040;"></div>
<div class="t mono" style="left:44px;top:513.5px;width:43.80000000000001px;text-align:right;font-size:14px;line-height:19px;color:#858585;left:0px;width:43.8px">28</div>
<div class="t mono" style="left:70.30000000000001px;top:513.5px;font-size:14px;line-height:19px;color:#d4d4d4;letter-spacing:0.050px">    <span style="color:#9cdcfe">&quot;path&quot;</span>: <span style="color:#ce9178">&quot;base/startup&quot;</span>,</div>
<div class="r" style="left:70.0px;top:513.5px;width:1px;height:19px;background:#404040;"></div>
<div class="r" style="left:86.9px;top:513.5px;width:1px;height:19px;background:#404040;"></div>
<div class="t mono" style="left:44px;top:532.5px;width:43.80000000000001px;text-align:right;font-size:14px;line-height:19px;color:#858585;left:0px;width:43.8px">29</div>
<div class="t mono" style="left:70.30000000000001px;top:532.5px;font-size:14px;line-height:19px;color:#d4d4d4;letter-spacing:0.050px">    <span style="color:#9cdcfe">&quot;name&quot;</span>: <span style="color:#ce9178">&quot;startup&quot;</span>,</div>
<div class="r" style="left:70.0px;top:532.5px;width:1px;height:19px;background:#404040;"></div>
<div class="r" style="left:86.9px;top:532.5px;width:1px;height:19px;background:#404040;"></div>
<div class="t mono" style="left:44px;top:551.5px;width:43.80000000000001px;text-align:right;font-size:14px;line-height:19px;color:#858585;left:0px;width:43.8px">30</div>
<div class="t mono" style="left:70.30000000000001px;top:551.5px;font-size:14px;line-height:19px;color:#d4d4d4;letter-spacing:0.050px">    <span style="color:#9cdcfe">&quot;dir&quot;</span>: <span style="color:#ce9178">&quot;base&quot;</span></div>
<div class="r" style="left:70.0px;top:551.5px;width:1px;height:19px;background:#404040;"></div>
<div class="r" style="left:86.9px;top:551.5px;width:1px;height:19px;background:#404040;"></div>
<div class="t mono" style="left:44px;top:570.5px;width:43.80000000000001px;text-align:right;font-size:14px;line-height:19px;color:#858585;left:0px;width:43.8px">31</div>
<div class="t mono" style="left:70.30000000000001px;top:570.5px;font-size:14px;line-height:19px;color:#d4d4d4;letter-spacing:0.050px">  },</div>
<div class="r" style="left:70.0px;top:570.5px;width:1px;height:19px;background:#404040;"></div>
<div class="t mono" style="left:44px;top:589.5px;width:43.80000000000001px;text-align:right;font-size:14px;line-height:19px;color:#858585;left:0px;width:43.8px">32</div>
<div class="t mono" style="left:70.30000000000001px;top:589.5px;font-size:14px;line-height:19px;color:#d4d4d4;letter-spacing:0.050px">  <span style="color:#9cdcfe">&quot;hiviewdfx&quot;</span>: {</div>
<div class="r" style="left:70.0px;top:589.5px;width:1px;height:19px;background:#404040;"></div>
<div class="t mono" style="left:44px;top:608.5px;width:43.80000000000001px;text-align:right;font-size:14px;line-height:19px;color:#858585;left:0px;width:43.8px">33</div>
<div class="t mono" style="left:70.30000000000001px;top:608.5px;font-size:14px;line-height:19px;color:#d4d4d4;letter-spacing:0.050px">    <span style="color:#9cdcfe">&quot;project&quot;</span>: <span style="color:#ce9178">&quot;hmf/hiviewdfx&quot;</span>,</div>
<div class="r" style="left:70.0px;top:608.5px;width:1px;height:19px;background:#404040;"></div>
<div class="r" style="left:86.9px;top:608.5px;width:1px;height:19px;background:#404040;"></div>
<div class="t mono" style="left:44px;top:627.5px;width:43.80000000000001px;text-align:right;font-size:14px;line-height:19px;color:#858585;left:0px;width:43.8px">34</div>
<div class="t mono" style="left:70.30000000000001px;top:627.5px;font-size:14px;line-height:19px;color:#d4d4d4;letter-spacing:0.050px">    <span style="color:#9cdcfe">&quot;path&quot;</span>: <span style="color:#ce9178">&quot;base/hiviewdfx&quot;</span>,</div>
<div class="r" style="left:70.0px;top:627.5px;width:1px;height:19px;background:#404040;"></div>
<div class="r" style="left:86.9px;top:627.5px;width:1px;height:19px;background:#404040;"></div>
<div class="t mono" style="left:44px;top:646.5px;width:43.80000000000001px;text-align:right;font-size:14px;line-height:19px;color:#858585;left:0px;width:43.8px">35</div>
<div class="t mono" style="left:70.30000000000001px;top:646.5px;font-size:14px;line-height:19px;color:#d4d4d4;letter-spacing:0.050px">    <span style="color:#9cdcfe">&quot;name&quot;</span>: <span style="color:#ce9178">&quot;hiviewdfx&quot;</span>,</div>
<div class="r" style="left:70.0px;top:646.5px;width:1px;height:19px;background:#404040;"></div>
<div class="r" style="left:86.9px;top:646.5px;width:1px;height:19px;background:#404040;"></div>
<div class="t mono" style="left:44px;top:665.5px;width:43.80000000000001px;text-align:right;font-size:14px;line-height:19px;color:#858585;left:0px;width:43.8px">36</div>
<div class="t mono" style="left:70.30000000000001px;top:665.5px;font-size:14px;line-height:19px;color:#d4d4d4;letter-spacing:0.050px">    <span style="color:#9cdcfe">&quot;dir&quot;</span>: <span style="color:#ce9178">&quot;base&quot;</span></div>
<div class="r" style="left:70.0px;top:665.5px;width:1px;height:19px;background:#404040;"></div>
<div class="r" style="left:86.9px;top:665.5px;width:1px;height:19px;background:#404040;"></div>
<div class="t mono" style="left:44px;top:684.5px;width:43.80000000000001px;text-align:right;font-size:14px;line-height:19px;color:#858585;left:0px;width:43.8px">37</div>
<div class="t mono" style="left:70.30000000000001px;top:684.5px;font-size:14px;line-height:19px;color:#d4d4d4;letter-spacing:0.050px">  },</div>
<div class="r" style="left:70.0px;top:684.5px;width:1px;height:19px;background:#404040;"></div>
<div class="t mono" style="left:44px;top:703.5px;width:43.80000000000001px;text-align:right;font-size:14px;line-height:19px;color:#858585;left:0px;width:43.8px">38</div>
<div class="t mono" style="left:70.30000000000001px;top:703.5px;font-size:14px;line-height:19px;color:#d4d4d4;letter-spacing:0.050px">  <span style="color:#9cdcfe">&quot;utils&quot;</span>: {</div>
<div class="r" style="left:70.0px;top:703.5px;width:1px;height:19px;background:#404040;"></div>
</div>
<svg class="r" style="left:1592px;top:146px;" width="112" height="376" viewBox="0 0 112 376"><rect x="0" y="362" width="112" height="2" fill="#264f78" fill-opacity="0.75"/><rect x="0" y="0" width="1" height="1.6" fill="#d4d4d4" fill-opacity="0.32"/><rect x="2" y="2" width="5" height="1.6" fill="#9cdcfe" fill-opacity="0.42"/><rect x="7" y="2" width="1" height="1.6" fill="#d4d4d4" fill-opacity="0.32"/><rect x="9" y="2" width="1" height="1.6" fill="#d4d4d4" fill-opacity="0.32"/><rect x="4" y="4" width="9" height="1.6" fill="#9cdcfe" fill-opacity="0.42"/><rect x="13" y="4" width="1" height="1.6" fill="#d4d4d4" fill-opacity="0.32"/><rect x="15" y="4" width="9" height="1.6" fill="#ce9178" fill-opacity="0.42"/><rect x="24" y="4" width="1" height="1.6" fill="#d4d4d4" fill-opacity="0.32"/><rect x="4" y="6" width="6" height="1.6" fill="#9cdcfe" fill-opacity="0.42"/><rect x="10" y="6" width="1" height="1.6" fill="#d4d4d4" fill-opacity="0.32"/><rect x="12" y="6" width="16" height="1.6" fill="#ce9178" fill-opacity="0.42"/><rect x="28" y="6" width="1" height="1.6" fill="#d4d4d4" fill-opacity="0.32"/><rect x="4" y="8" width="6" height="1.6" fill="#9cdcfe" fill-opacity="0.42"/><rect x="10" y="8" width="1" height="1.6" fill="#d4d4d4" fill-opacity="0.32"/><rect x="12" y="8" width="5" height="1.6" fill="#ce9178" fill-opacity="0.42"/><rect x="17" y="8" width="1" height="1.6" fill="#d4d4d4" fill-opacity="0.32"/><rect x="4" y="10" width="5" height="1.6" fill="#9cdcfe" fill-opacity="0.42"/><rect x="9" y="10" width="1" height="1.6" fill="#d4d4d4" fill-opacity="0.32"/><rect x="11" y="10" width="12" height="1.6" fill="#ce9178" fill-opacity="0.42"/><rect x="2" y="12" width="2" height="1.6" fill="#d4d4d4" fill-opacity="0.32"/><rect x="2" y="14" width="9" height="1.6" fill="#9cdcfe" fill-opacity="0.42"/><rect x="11" y="14" width="1" height="1.6" fill="#d4d4d4" fill-opacity="0.32"/><rect x="13" y="14" width="1" height="1.6" fill="#d4d4d4" fill-opacity="0.32"/><rect x="4" y="16" width="9" height="1.6" fill="#9cdcfe" fill-opacity="0.42"/><rect x="13" y="16" width="1" height="1.6" fill="#d4d4d4" fill-opacity="0.32"/><rect x="15" y="16" width="13" height="1.6" fill="#ce9178" fill-opacity="0.42"/><rect x="28" y="16" width="1" height="1.6" fill="#d4d4d4" fill-opacity="0.32"/><rect x="4" y="18" width="6" height="1.6" fill="#9cdcfe" fill-opacity="0.42"/><rect x="10" y="18" width="1" height="1.6" fill="#d4d4d4" fill-opacity="0.32"/><rect x="12" y="18" width="14" height="1.6" fill="#ce9178" fill-opacity="0.42"/><rect x="26" y="18" width="1" height="1.6" fill="#d4d4d4" fill-opacity="0.32"/><rect x="4" y="20" width="6" height="1.6" fill="#9cdcfe" fill-opacity="0.42"/><rect x="10" y="20" width="1" height="1.6" fill="#d4d4d4" fill-opacity="0.32"/><rect x="12" y="20" width="9" height="1.6" fill="#ce9178" fill-opacity="0.42"/><rect x="21" y="20" width="1" height="1.6" fill="#d4d4d4" fill-opacity="0.32"/><rect x="4" y="22" width="5" height="1.6" fill="#9cdcfe" fill-opacity="0.42"/><rect x="9" y="22" width="1" height="1.6" fill="#d4d4d4" fill-opacity="0.32"/><rect x="11" y="22" width="6" height="1.6" fill="#ce9178" fill-opacity="0.42"/><rect x="2" y="24" width="2" height="1.6" fill="#d4d4d4" fill-opacity="0.32"/><rect x="2" y="26" width="20" height="1.6" fill="#9cdcfe" fill-opacity="0.42"/><rect x="22" y="26" width="1" height="1.6" fill="#d4d4d4" fill-opacity="0.32"/><rect x="24" y="26" width="1" height="1.6" fill="#d4d4d4" fill-opacity="0.32"/><rect x="4" y="28" width="9" height="1.6" fill="#9cdcfe" fill-opacity="0.42"/><rect x="13" y="28" width="1" height="1.6" fill="#d4d4d4" fill-opacity="0.32"/><rect x="15" y="28" width="24" height="1.6" fill="#ce9178" fill-opacity="0.42"/><rect x="39" y="28" width="1" height="1.6" fill="#d4d4d4" fill-opacity="0.32"/><rect x="4" y="30" width="6" height="1.6" fill="#9cdcfe" fill-opacity="0.42"/><rect x="10" y="30" width="1" height="1.6" fill="#d4d4d4" fill-opacity="0.32"/><rect x="12" y="30" width="31" height="1.6" fill="#ce9178" fill-opacity="0.42"/><rect x="43" y="30" width="1" height="1.6" fill="#d4d4d4" fill-opacity="0.32"/><rect x="4" y="32" width="6" height="1.6" fill="#9cdcfe" fill-opacity="0.42"/><rect x="10" y="32" width="1" height="1.6" fill="#d4d4d4" fill-opacity="0.32"/><rect x="12" y="32" width="20" height="1.6" fill="#ce9178" fill-opacity="0.42"/><rect x="32" y="32" width="1" height="1.6" fill="#d4d4d4" fill-opacity="0.32"/><rect x="4" y="34" width="5" height="1.6" fill="#9cdcfe" fill-opacity="0.42"/><rect x="9" y="34" width="1" height="1.6" fill="#d4d4d4" fill-opacity="0.32"/><rect x="11" y="34" width="12" height="1.6" fill="#ce9178" fill-opacity="0.42"/><rect x="2" y="36" width="2" height="1.6" fill="#d4d4d4" fill-opacity="0.32"/><rect x="2" y="38" width="10" height="1.6" fill="#9cdcfe" fill-opacity="0.42"/><rect x="12" y="38" width="1" height="1.6" fill="#d4d4d4" fill-opacity="0.32"/><rect x="14" y="38" width="1" height="1.6" fill="#d4d4d4" fill-opacity="0.32"/><rect x="4" y="40" width="9" height="1.6" fill="#9cdcfe" fill-opacity="0.42"/><rect x="13" y="40" width="1" height="1.6" fill="#d4d4d4" fill-opacity="0.32"/><rect x="15" y="40" width="14" height="1.6" fill="#ce9178" fill-opacity="0.42"/><rect x="29" y="40" width="1" height="1.6" fill="#d4d4d4" fill-opacity="0.32"/><rect x="4" y="42" width="6" height="1.6" fill="#9cdcfe" fill-opacity="0.42"/><rect x="10" y="42" width="1" height="1.6" fill="#d4d4d4" fill-opacity="0.32"/><rect x="12" y="42" width="15" height="1.6" fill="#ce9178" fill-opacity="0.42"/><rect x="27" y="42" width="1" height="1.6" fill="#d4d4d4" fill-opacity="0.32"/><rect x="4" y="44" width="6" height="1.6" fill="#9cdcfe" fill-opacity="0.42"/><rect x="10" y="44" width="1" height="1.6" fill="#d4d4d4" fill-opacity="0.32"/><rect x="12" y="44" width="10" height="1.6" fill="#ce9178" fill-opacity="0.42"/><rect x="22" y="44" width="1" height="1.6" fill="#d4d4d4" fill-opacity="0.32"/><rect x="4" y="46" width="5" height="1.6" fill="#9cdcfe" fill-opacity="0.42"/><rect x="9" y="46" width="1" height="1.6" fill="#d4d4d4" fill-opacity="0.32"/><rect x="11" y="46" width="6" height="1.6" fill="#ce9178" fill-opacity="0.42"/><rect x="2" y="48" width="2" height="1.6" fill="#d4d4d4" fill-opacity="0.32"/><rect x="2" y="50" width="9" height="1.6" fill="#9cdcfe" fill-opacity="0.42"/><rect x="11" y="50" width="1" height="1.6" fill="#d4d4d4" fill-opacity="0.32"/><rect x="13" y="50" width="1" height="1.6" fill="#d4d4d4" fill-opacity="0.32"/><rect x="4" y="52" width="9" height="1.6" fill="#9cdcfe" fill-opacity="0.42"/><rect x="13" y="52" width="1" height="1.6" fill="#d4d4d4" fill-opacity="0.32"/><rect x="15" y="52" width="13" height="1.6" fill="#ce9178" fill-opacity="0.42"/><rect x="28" y="52" width="1" height="1.6" fill="#d4d4d4" fill-opacity="0.32"/><rect x="4" y="54" width="6" height="1.6" fill="#9cdcfe" fill-opacity="0.42"/><rect x="10" y="54" width="1" height="1.6" fill="#d4d4d4" fill-opacity="0.32"/><rect x="12" y="54" width="14" height="1.6" fill="#ce9178" fill-opacity="0.42"/><rect x="26" y="54" width="1" height="1.6" fill="#d4d4d4" fill-opacity="0.32"/><rect x="4" y="56" width="6" height="1.6" fill="#9cdcfe" fill-opacity="0.42"/><rect x="10" y="56" width="1" height="1.6" fill="#d4d4d4" fill-opacity="0.32"/><rect x="12" y="56" width="9" height="1.6" fill="#ce9178" fill-opacity="0.42"/><rect x="21" y="56" width="1" height="1.6" fill="#d4d4d4" fill-opacity="0.32"/><rect x="4" y="58" width="5" height="1.6" fill="#9cdcfe" fill-opacity="0.42"/><rect x="9" y="58" width="1" height="1.6" fill="#d4d4d4" fill-opacity="0.32"/><rect x="11" y="58" width="6" height="1.6" fill="#ce9178" fill-opacity="0.42"/><rect x="2" y="60" width="2" height="1.6" fill="#d4d4d4" fill-opacity="0.32"/><rect x="2" y="62" width="11" height="1.6" fill="#9cdcfe" fill-opacity="0.42"/><rect x="13" y="62" width="1" height="1.6" fill="#d4d4d4" fill-opacity="0.32"/><rect x="15" y="62" width="1" height="1.6" fill="#d4d4d4" fill-opacity="0.32"/><rect x="4" y="64" width="9" height="1.6" fill="#9cdcfe" fill-opacity="0.42"/><rect x="13" y="64" width="1" height="1.6" fill="#d4d4d4" fill-opacity="0.32"/><rect x="15" y="64" width="15" height="1.6" fill="#ce9178" fill-opacity="0.42"/><rect x="30" y="64" width="1" height="1.6" fill="#d4d4d4" fill-opacity="0.32"/><rect x="4" y="66" width="6" height="1.6" fill="#9cdcfe" fill-opacity="0.42"/><rect x="10" y="66" width="1" height="1.6" fill="#d4d4d4" fill-opacity="0.32"/><rect x="12" y="66" width="16" height="1.6" fill="#ce9178" fill-opacity="0.42"/><rect x="28" y="66" width="1" height="1.6" fill="#d4d4d4" fill-opacity="0.32"/><rect x="4" y="68" width="6" height="1.6" fill="#9cdcfe" fill-opacity="0.42"/><rect x="10" y="68" width="1" height="1.6" fill="#d4d4d4" fill-opacity="0.32"/><rect x="12" y="68" width="11" height="1.6" fill="#ce9178" fill-opacity="0.42"/><rect x="23" y="68" width="1" height="1.6" fill="#d4d4d4" fill-opacity="0.32"/><rect x="4" y="70" width="5" height="1.6" fill="#9cdcfe" fill-opacity="0.42"/><rect x="9" y="70" width="1" height="1.6" fill="#d4d4d4" fill-opacity="0.32"/><rect x="11" y="70" width="6" height="1.6" fill="#ce9178" fill-opacity="0.42"/><rect x="2" y="72" width="2" height="1.6" fill="#d4d4d4" fill-opacity="0.32"/><rect x="2" y="74" width="7" height="1.6" fill="#9cdcfe" fill-opacity="0.42"/><rect x="9" y="74" width="1" height="1.6" fill="#d4d4d4" fill-opacity="0.32"/><rect x="11" y="74" width="1" height="1.6" fill="#d4d4d4" fill-opacity="0.32"/><rect x="4" y="76" width="9" height="1.6" fill="#9cdcfe" fill-opacity="0.42"/><rect x="13" y="76" width="1" height="1.6" fill="#d4d4d4" fill-opacity="0.32"/><rect x="15" y="76" width="11" height="1.6" fill="#ce9178" fill-opacity="0.42"/><rect x="26" y="76" width="1" height="1.6" fill="#d4d4d4" fill-opacity="0.32"/><rect x="4" y="78" width="6" height="1.6" fill="#9cdcfe" fill-opacity="0.42"/><rect x="10" y="78" width="1" height="1.6" fill="#d4d4d4" fill-opacity="0.32"/><rect x="12" y="78" width="7" height="1.6" fill="#ce9178" fill-opacity="0.42"/><rect x="19" y="78" width="1" height="1.6" fill="#d4d4d4" fill-opacity="0.32"/><rect x="4" y="80" width="6" height="1.6" fill="#9cdcfe" fill-opacity="0.42"/><rect x="10" y="80" width="1" height="1.6" fill="#d4d4d4" fill-opacity="0.32"/><rect x="12" y="80" width="7" height="1.6" fill="#ce9178" fill-opacity="0.42"/><rect x="19" y="80" width="1" height="1.6" fill="#d4d4d4" fill-opacity="0.32"/><rect x="4" y="82" width="5" height="1.6" fill="#9cdcfe" fill-opacity="0.42"/><rect x="9" y="82" width="1" height="1.6" fill="#d4d4d4" fill-opacity="0.32"/><rect x="11" y="82" width="7" height="1.6" fill="#ce9178" fill-opacity="0.42"/><rect x="2" y="84" width="2" height="1.6" fill="#d4d4d4" fill-opacity="0.32"/><rect x="2" y="86" width="12" height="1.6" fill="#9cdcfe" fill-opacity="0.42"/><rect x="14" y="86" width="1" height="1.6" fill="#d4d4d4" fill-opacity="0.32"/><rect x="16" y="86" width="1" height="1.6" fill="#d4d4d4" fill-opacity="0.32"/><rect x="4" y="88" width="9" height="1.6" fill="#9cdcfe" fill-opacity="0.42"/><rect x="13" y="88" width="1" height="1.6" fill="#d4d4d4" fill-opacity="0.32"/><rect x="15" y="88" width="16" height="1.6" fill="#ce9178" fill-opacity="0.42"/><rect x="31" y="88" width="1" height="1.6" fill="#d4d4d4" fill-opacity="0.32"/><rect x="4" y="90" width="6" height="1.6" fill="#9cdcfe" fill-opacity="0.42"/><rect x="10" y="90" width="1" height="1.6" fill="#d4d4d4" fill-opacity="0.32"/><rect x="12" y="90" width="23" height="1.6" fill="#ce9178" fill-opacity="0.42"/><rect x="35" y="90" width="1" height="1.6" fill="#d4d4d4" fill-opacity="0.32"/><rect x="4" y="92" width="6" height="1.6" fill="#9cdcfe" fill-opacity="0.42"/><rect x="10" y="92" width="1" height="1.6" fill="#d4d4d4" fill-opacity="0.32"/><rect x="12" y="92" width="12" height="1.6" fill="#ce9178" fill-opacity="0.42"/><rect x="24" y="92" width="1" height="1.6" fill="#d4d4d4" fill-opacity="0.32"/><rect x="4" y="94" width="5" height="1.6" fill="#9cdcfe" fill-opacity="0.42"/><rect x="9" y="94" width="1" height="1.6" fill="#d4d4d4" fill-opacity="0.32"/><rect x="11" y="94" width="12" height="1.6" fill="#ce9178" fill-opacity="0.42"/><rect x="2" y="96" width="2" height="1.6" fill="#d4d4d4" fill-opacity="0.32"/><rect x="2" y="98" width="7" height="1.6" fill="#9cdcfe" fill-opacity="0.42"/><rect x="9" y="98" width="1" height="1.6" fill="#d4d4d4" fill-opacity="0.32"/><rect x="11" y="98" width="1" height="1.6" fill="#d4d4d4" fill-opacity="0.32"/><rect x="4" y="100" width="9" height="1.6" fill="#9cdcfe" fill-opacity="0.42"/><rect x="13" y="100" width="1" height="1.6" fill="#d4d4d4" fill-opacity="0.32"/><rect x="15" y="100" width="11" height="1.6" fill="#ce9178" fill-opacity="0.42"/><rect x="26" y="100" width="1" height="1.6" fill="#d4d4d4" fill-opacity="0.32"/><rect x="4" y="102" width="6" height="1.6" fill="#9cdcfe" fill-opacity="0.42"/><rect x="10" y="102" width="1" height="1.6" fill="#d4d4d4" fill-opacity="0.32"/><rect x="12" y="102" width="18" height="1.6" fill="#ce9178" fill-opacity="0.42"/><rect x="30" y="102" width="1" height="1.6" fill="#d4d4d4" fill-opacity="0.32"/><rect x="4" y="104" width="6" height="1.6" fill="#9cdcfe" fill-opacity="0.42"/><rect x="10" y="104" width="1" height="1.6" fill="#d4d4d4" fill-opacity="0.32"/><rect x="12" y="104" width="7" height="1.6" fill="#ce9178" fill-opacity="0.42"/><rect x="19" y="104" width="1" height="1.6" fill="#d4d4d4" fill-opacity="0.32"/><rect x="4" y="106" width="5" height="1.6" fill="#9cdcfe" fill-opacity="0.42"/><rect x="9" y="106" width="1" height="1.6" fill="#d4d4d4" fill-opacity="0.32"/><rect x="11" y="106" width="12" height="1.6" fill="#ce9178" fill-opacity="0.42"/><rect x="2" y="108" width="2" height="1.6" fill="#d4d4d4" fill-opacity="0.32"/><rect x="2" y="110" width="14" height="1.6" fill="#9cdcfe" fill-opacity="0.42"/><rect x="16" y="110" width="1" height="1.6" fill="#d4d4d4" fill-opacity="0.32"/><rect x="18" y="110" width="1" height="1.6" fill="#d4d4d4" fill-opacity="0.32"/><rect x="4" y="112" width="9" height="1.6" fill="#9cdcfe" fill-opacity="0.42"/><rect x="13" y="112" width="1" height="1.6" fill="#d4d4d4" fill-opacity="0.32"/><rect x="15" y="112" width="18" height="1.6" fill="#ce9178" fill-opacity="0.42"/><rect x="33" y="112" width="1" height="1.6" fill="#d4d4d4" fill-opacity="0.32"/><rect x="4" y="114" width="6" height="1.6" fill="#9cdcfe" fill-opacity="0.42"/><rect x="10" y="114" width="1" height="1.6" fill="#d4d4d4" fill-opacity="0.32"/><rect x="12" y="114" width="19" height="1.6" fill="#ce9178" fill-opacity="0.42"/><rect x="31" y="114" width="1" height="1.6" fill="#d4d4d4" fill-opacity="0.32"/><rect x="4" y="116" width="6" height="1.6" fill="#9cdcfe" fill-opacity="0.42"/><rect x="10" y="116" width="1" height="1.6" fill="#d4d4d4" fill-opacity="0.32"/><rect x="12" y="116" width="14" height="1.6" fill="#ce9178" fill-opacity="0.42"/><rect x="26" y="116" width="1" height="1.6" fill="#d4d4d4" fill-opacity="0.32"/><rect x="4" y="118" width="5" height="1.6" fill="#9cdcfe" fill-opacity="0.42"/><rect x="9" y="118" width="1" height="1.6" fill="#d4d4d4" fill-opacity="0.32"/><rect x="11" y="118" width="6" height="1.6" fill="#ce9178" fill-opacity="0.42"/><rect x="2" y="120" width="2" height="1.6" fill="#d4d4d4" fill-opacity="0.32"/><rect x="2" y="122" width="15" height="1.6" fill="#9cdcfe" fill-opacity="0.42"/><rect x="17" y="122" width="1" height="1.6" fill="#d4d4d4" fill-opacity="0.32"/><rect x="19" y="122" width="1" height="1.6" fill="#d4d4d4" fill-opacity="0.32"/><rect x="4" y="124" width="9" height="1.6" fill="#9cdcfe" fill-opacity="0.42"/><rect x="13" y="124" width="1" height="1.6" fill="#d4d4d4" fill-opacity="0.32"/><rect x="15" y="124" width="19" height="1.6" fill="#ce9178" fill-opacity="0.42"/><rect x="34" y="124" width="1" height="1.6" fill="#d4d4d4" fill-opacity="0.32"/><rect x="4" y="126" width="6" height="1.6" fill="#9cdcfe" fill-opacity="0.42"/><rect x="10" y="126" width="1" height="1.6" fill="#d4d4d4" fill-opacity="0.32"/><rect x="12" y="126" width="26" height="1.6" fill="#ce9178" fill-opacity="0.42"/><rect x="38" y="126" width="1" height="1.6" fill="#d4d4d4" fill-opacity="0.32"/><rect x="4" y="128" width="6" height="1.6" fill="#9cdcfe" fill-opacity="0.42"/><rect x="10" y="128" width="1" height="1.6" fill="#d4d4d4" fill-opacity="0.32"/><rect x="12" y="128" width="15" height="1.6" fill="#ce9178" fill-opacity="0.42"/><rect x="27" y="128" width="1" height="1.6" fill="#d4d4d4" fill-opacity="0.32"/><rect x="4" y="130" width="5" height="1.6" fill="#9cdcfe" fill-opacity="0.42"/><rect x="9" y="130" width="1" height="1.6" fill="#d4d4d4" fill-opacity="0.32"/><rect x="11" y="130" width="12" height="1.6" fill="#ce9178" fill-opacity="0.42"/><rect x="2" y="132" width="2" height="1.6" fill="#d4d4d4" fill-opacity="0.32"/><rect x="2" y="134" width="21" height="1.6" fill="#9cdcfe" fill-opacity="0.42"/><rect x="23" y="134" width="1" height="1.6" fill="#d4d4d4" fill-opacity="0.32"/><rect x="25" y="134" width="1" height="1.6" fill="#d4d4d4" fill-opacity="0.32"/><rect x="4" y="136" width="9" height="1.6" fill="#9cdcfe" fill-opacity="0.42"/><rect x="13" y="136" width="1" height="1.6" fill="#d4d4d4" fill-opacity="0.32"/><rect x="15" y="136" width="25" height="1.6" fill="#ce9178" fill-opacity="0.42"/><rect x="40" y="136" width="1" height="1.6" fill="#d4d4d4" fill-opacity="0.32"/><rect x="4" y="138" width="6" height="1.6" fill="#9cdcfe" fill-opacity="0.42"/><rect x="10" y="138" width="1" height="1.6" fill="#d4d4d4" fill-opacity="0.32"/><rect x="12" y="138" width="32" height="1.6" fill="#ce9178" fill-opacity="0.42"/><rect x="44" y="138" width="1" height="1.6" fill="#d4d4d4" fill-opacity="0.32"/><rect x="4" y="140" width="6" height="1.6" fill="#9cdcfe" fill-opacity="0.42"/><rect x="10" y="140" width="1" height="1.6" fill="#d4d4d4" fill-opacity="0.32"/><rect x="12" y="140" width="21" height="1.6" fill="#ce9178" fill-opacity="0.42"/><rect x="33" y="140" width="1" height="1.6" fill="#d4d4d4" fill-opacity="0.32"/><rect x="4" y="142" width="5" height="1.6" fill="#9cdcfe" fill-opacity="0.42"/><rect x="9" y="142" width="1" height="1.6" fill="#d4d4d4" fill-opacity="0.32"/><rect x="11" y="142" width="12" height="1.6" fill="#ce9178" fill-opacity="0.42"/><rect x="2" y="144" width="2" height="1.6" fill="#d4d4d4" fill-opacity="0.32"/><rect x="2" y="146" width="5" height="1.6" fill="#9cdcfe" fill-opacity="0.42"/><rect x="7" y="146" width="1" height="1.6" fill="#d4d4d4" fill-opacity="0.32"/><rect x="9" y="146" width="1" height="1.6" fill="#d4d4d4" fill-opacity="0.32"/><rect x="4" y="148" width="9" height="1.6" fill="#9cdcfe" fill-opacity="0.42"/><rect x="13" y="148" width="1" height="1.6" fill="#d4d4d4" fill-opacity="0.32"/><rect x="15" y="148" width="13" height="1.6" fill="#ce9178" fill-opacity="0.42"/><rect x="28" y="148" width="1" height="1.6" fill="#d4d4d4" fill-opacity="0.32"/><rect x="4" y="150" width="6" height="1.6" fill="#9cdcfe" fill-opacity="0.42"/><rect x="10" y="150" width="1" height="1.6" fill="#d4d4d4" fill-opacity="0.32"/><rect x="12" y="150" width="17" height="1.6" fill="#ce9178" fill-opacity="0.42"/><rect x="29" y="150" width="1" height="1.6" fill="#d4d4d4" fill-opacity="0.32"/><rect x="4" y="152" width="6" height="1.6" fill="#9cdcfe" fill-opacity="0.42"/><rect x="10" y="152" width="1" height="1.6" fill="#d4d4d4" fill-opacity="0.32"/><rect x="12" y="152" width="5" height="1.6" fill="#ce9178" fill-opacity="0.42"/><rect x="17" y="152" width="1" height="1.6" fill="#d4d4d4" fill-opacity="0.32"/><rect x="4" y="154" width="5" height="1.6" fill="#9cdcfe" fill-opacity="0.42"/><rect x="9" y="154" width="1" height="1.6" fill="#d4d4d4" fill-opacity="0.32"/><rect x="11" y="154" width="9" height="1.6" fill="#ce9178" fill-opacity="0.42"/><rect x="2" y="156" width="2" height="1.6" fill="#d4d4d4" fill-opacity="0.32"/><rect x="2" y="158" width="8" height="1.6" fill="#9cdcfe" fill-opacity="0.42"/><rect x="10" y="158" width="1" height="1.6" fill="#d4d4d4" fill-opacity="0.32"/><rect x="12" y="158" width="1" height="1.6" fill="#d4d4d4" fill-opacity="0.32"/><rect x="4" y="160" width="9" height="1.6" fill="#9cdcfe" fill-opacity="0.42"/><rect x="13" y="160" width="1" height="1.6" fill="#d4d4d4" fill-opacity="0.32"/><rect x="15" y="160" width="12" height="1.6" fill="#ce9178" fill-opacity="0.42"/><rect x="27" y="160" width="1" height="1.6" fill="#d4d4d4" fill-opacity="0.32"/><rect x="4" y="162" width="6" height="1.6" fill="#9cdcfe" fill-opacity="0.42"/><rect x="10" y="162" width="1" height="1.6" fill="#d4d4d4" fill-opacity="0.32"/><rect x="12" y="162" width="8" height="1.6" fill="#ce9178" fill-opacity="0.42"/><rect x="20" y="162" width="1" height="1.6" fill="#d4d4d4" fill-opacity="0.32"/><rect x="4" y="164" width="6" height="1.6" fill="#9cdcfe" fill-opacity="0.42"/><rect x="10" y="164" width="1" height="1.6" fill="#d4d4d4" fill-opacity="0.32"/><rect x="12" y="164" width="8" height="1.6" fill="#ce9178" fill-opacity="0.42"/><rect x="20" y="164" width="1" height="1.6" fill="#d4d4d4" fill-opacity="0.32"/><rect x="4" y="166" width="5" height="1.6" fill="#9cdcfe" fill-opacity="0.42"/><rect x="9" y="166" width="1" height="1.6" fill="#d4d4d4" fill-opacity="0.32"/><rect x="11" y="166" width="8" height="1.6" fill="#ce9178" fill-opacity="0.42"/><rect x="2" y="168" width="2" height="1.6" fill="#d4d4d4" fill-opacity="0.32"/><rect x="2" y="170" width="9" height="1.6" fill="#9cdcfe" fill-opacity="0.42"/><rect x="11" y="170" width="1" height="1.6" fill="#d4d4d4" fill-opacity="0.32"/><rect x="13" y="170" width="1" height="1.6" fill="#d4d4d4" fill-opacity="0.32"/><rect x="4" y="172" width="9" height="1.6" fill="#9cdcfe" fill-opacity="0.42"/><rect x="13" y="172" width="1" height="1.6" fill="#d4d4d4" fill-opacity="0.32"/><rect x="15" y="172" width="13" height="1.6" fill="#ce9178" fill-opacity="0.42"/><rect x="28" y="172" width="1" height="1.6" fill="#d4d4d4" fill-opacity="0.32"/><rect x="4" y="174" width="6" height="1.6" fill="#9cdcfe" fill-opacity="0.42"/><rect x="10" y="174" width="1" height="1.6" fill="#d4d4d4" fill-opacity="0.32"/><rect x="12" y="174" width="14" height="1.6" fill="#ce9178" fill-opacity="0.42"/><rect x="26" y="174" width="1" height="1.6" fill="#d4d4d4" fill-opacity="0.32"/><rect x="4" y="176" width="6" height="1.6" fill="#9cdcfe" fill-opacity="0.42"/><rect x="10" y="176" width="1" height="1.6" fill="#d4d4d4" fill-opacity="0.32"/><rect x="12" y="176" width="9" height="1.6" fill="#ce9178" fill-opacity="0.42"/><rect x="21" y="176" width="1" height="1.6" fill="#d4d4d4" fill-opacity="0.32"/><rect x="4" y="178" width="5" height="1.6" fill="#9cdcfe" fill-opacity="0.42"/><rect x="9" y="178" width="1" height="1.6" fill="#d4d4d4" fill-opacity="0.32"/><rect x="11" y="178" width="6" height="1.6" fill="#ce9178" fill-opacity="0.42"/><rect x="2" y="180" width="2" height="1.6" fill="#d4d4d4" fill-opacity="0.32"/><rect x="2" y="182" width="14" height="1.6" fill="#9cdcfe" fill-opacity="0.42"/><rect x="16" y="182" width="1" height="1.6" fill="#d4d4d4" fill-opacity="0.32"/><rect x="18" y="182" width="1" height="1.6" fill="#d4d4d4" fill-opacity="0.32"/><rect x="4" y="184" width="9" height="1.6" fill="#9cdcfe" fill-opacity="0.42"/><rect x="13" y="184" width="1" height="1.6" fill="#d4d4d4" fill-opacity="0.32"/><rect x="15" y="184" width="18" height="1.6" fill="#ce9178" fill-opacity="0.42"/><rect x="33" y="184" width="1" height="1.6" fill="#d4d4d4" fill-opacity="0.32"/><rect x="4" y="186" width="6" height="1.6" fill="#9cdcfe" fill-opacity="0.42"/><rect x="10" y="186" width="1" height="1.6" fill="#d4d4d4" fill-opacity="0.32"/><rect x="12" y="186" width="19" height="1.6" fill="#ce9178" fill-opacity="0.42"/><rect x="31" y="186" width="1" height="1.6" fill="#d4d4d4" fill-opacity="0.32"/><rect x="4" y="188" width="6" height="1.6" fill="#9cdcfe" fill-opacity="0.42"/><rect x="10" y="188" width="1" height="1.6" fill="#d4d4d4" fill-opacity="0.32"/><rect x="12" y="188" width="14" height="1.6" fill="#ce9178" fill-opacity="0.42"/><rect x="26" y="188" width="1" height="1.6" fill="#d4d4d4" fill-opacity="0.32"/><rect x="4" y="190" width="5" height="1.6" fill="#9cdcfe" fill-opacity="0.42"/><rect x="9" y="190" width="1" height="1.6" fill="#d4d4d4" fill-opacity="0.32"/><rect x="11" y="190" width="6" height="1.6" fill="#ce9178" fill-opacity="0.42"/><rect x="2" y="192" width="2" height="1.6" fill="#d4d4d4" fill-opacity="0.32"/><rect x="2" y="194" width="17" height="1.6" fill="#9cdcfe" fill-opacity="0.42"/><rect x="19" y="194" width="1" height="1.6" fill="#d4d4d4" fill-opacity="0.32"/><rect x="21" y="194" width="1" height="1.6" fill="#d4d4d4" fill-opacity="0.32"/><rect x="4" y="196" width="9" height="1.6" fill="#9cdcfe" fill-opacity="0.42"/><rect x="13" y="196" width="1" height="1.6" fill="#d4d4d4" fill-opacity="0.32"/><rect x="15" y="196" width="21" height="1.6" fill="#ce9178" fill-opacity="0.42"/><rect x="36" y="196" width="1" height="1.6" fill="#d4d4d4" fill-opacity="0.32"/><rect x="4" y="198" width="6" height="1.6" fill="#9cdcfe" fill-opacity="0.42"/><rect x="10" y="198" width="1" height="1.6" fill="#d4d4d4" fill-opacity="0.32"/><rect x="12" y="198" width="28" height="1.6" fill="#ce9178" fill-opacity="0.42"/><rect x="40" y="198" width="1" height="1.6" fill="#d4d4d4" fill-opacity="0.32"/><rect x="4" y="200" width="6" height="1.6" fill="#9cdcfe" fill-opacity="0.42"/><rect x="10" y="200" width="1" height="1.6" fill="#d4d4d4" fill-opacity="0.32"/><rect x="12" y="200" width="17" height="1.6" fill="#ce9178" fill-opacity="0.42"/><rect x="29" y="200" width="1" height="1.6" fill="#d4d4d4" fill-opacity="0.32"/><rect x="4" y="202" width="5" height="1.6" fill="#9cdcfe" fill-opacity="0.42"/><rect x="9" y="202" width="1" height="1.6" fill="#d4d4d4" fill-opacity="0.32"/><rect x="11" y="202" width="12" height="1.6" fill="#ce9178" fill-opacity="0.42"/><rect x="2" y="204" width="2" height="1.6" fill="#d4d4d4" fill-opacity="0.32"/><rect x="2" y="206" width="12" height="1.6" fill="#9cdcfe" fill-opacity="0.42"/><rect x="14" y="206" width="1" height="1.6" fill="#d4d4d4" fill-opacity="0.32"/><rect x="16" y="206" width="1" height="1.6" fill="#d4d4d4" fill-opacity="0.32"/><rect x="4" y="208" width="9" height="1.6" fill="#9cdcfe" fill-opacity="0.42"/><rect x="13" y="208" width="1" height="1.6" fill="#d4d4d4" fill-opacity="0.32"/><rect x="15" y="208" width="16" height="1.6" fill="#ce9178" fill-opacity="0.42"/><rect x="31" y="208" width="1" height="1.6" fill="#d4d4d4" fill-opacity="0.32"/><rect x="4" y="210" width="6" height="1.6" fill="#9cdcfe" fill-opacity="0.42"/><rect x="10" y="210" width="1" height="1.6" fill="#d4d4d4" fill-opacity="0.32"/><rect x="12" y="210" width="23" height="1.6" fill="#ce9178" fill-opacity="0.42"/><rect x="35" y="210" width="1" height="1.6" fill="#d4d4d4" fill-opacity="0.32"/><rect x="4" y="212" width="6" height="1.6" fill="#9cdcfe" fill-opacity="0.42"/><rect x="10" y="212" width="1" height="1.6" fill="#d4d4d4" fill-opacity="0.32"/><rect x="12" y="212" width="12" height="1.6" fill="#ce9178" fill-opacity="0.42"/><rect x="24" y="212" width="1" height="1.6" fill="#d4d4d4" fill-opacity="0.32"/><rect x="4" y="214" width="5" height="1.6" fill="#9cdcfe" fill-opacity="0.42"/><rect x="9" y="214" width="1" height="1.6" fill="#d4d4d4" fill-opacity="0.32"/><rect x="11" y="214" width="12" height="1.6" fill="#ce9178" fill-opacity="0.42"/><rect x="2" y="216" width="2" height="1.6" fill="#d4d4d4" fill-opacity="0.32"/><rect x="2" y="218" width="9" height="1.6" fill="#9cdcfe" fill-opacity="0.42"/><rect x="11" y="218" width="1" height="1.6" fill="#d4d4d4" fill-opacity="0.32"/><rect x="13" y="218" width="1" height="1.6" fill="#d4d4d4" fill-opacity="0.32"/><rect x="4" y="220" width="9" height="1.6" fill="#9cdcfe" fill-opacity="0.42"/><rect x="13" y="220" width="1" height="1.6" fill="#d4d4d4" fill-opacity="0.32"/><rect x="15" y="220" width="13" height="1.6" fill="#ce9178" fill-opacity="0.42"/><rect x="28" y="220" width="1" height="1.6" fill="#d4d4d4" fill-opacity="0.32"/><rect x="4" y="222" width="6" height="1.6" fill="#9cdcfe" fill-opacity="0.42"/><rect x="10" y="222" width="1" height="1.6" fill="#d4d4d4" fill-opacity="0.32"/><rect x="12" y="222" width="20" height="1.6" fill="#ce9178" fill-opacity="0.42"/><rect x="32" y="222" width="1" height="1.6" fill="#d4d4d4" fill-opacity="0.32"/><rect x="4" y="224" width="6" height="1.6" fill="#9cdcfe" fill-opacity="0.42"/><rect x="10" y="224" width="1" height="1.6" fill="#d4d4d4" fill-opacity="0.32"/><rect x="12" y="224" width="9" height="1.6" fill="#ce9178" fill-opacity="0.42"/><rect x="21" y="224" width="1" height="1.6" fill="#d4d4d4" fill-opacity="0.32"/><rect x="4" y="226" width="5" height="1.6" fill="#9cdcfe" fill-opacity="0.42"/><rect x="9" y="226" width="1" height="1.6" fill="#d4d4d4" fill-opacity="0.32"/><rect x="11" y="226" width="12" height="1.6" fill="#ce9178" fill-opacity="0.42"/><rect x="2" y="228" width="2" height="1.6" fill="#d4d4d4" fill-opacity="0.32"/><rect x="2" y="230" width="11" height="1.6" fill="#9cdcfe" fill-opacity="0.42"/><rect x="13" y="230" width="1" height="1.6" fill="#d4d4d4" fill-opacity="0.32"/><rect x="15" y="230" width="1" height="1.6" fill="#d4d4d4" fill-opacity="0.32"/><rect x="4" y="232" width="9" height="1.6" fill="#9cdcfe" fill-opacity="0.42"/><rect x="13" y="232" width="1" height="1.6" fill="#d4d4d4" fill-opacity="0.32"/><rect x="15" y="232" width="15" height="1.6" fill="#ce9178" fill-opacity="0.42"/><rect x="30" y="232" width="1" height="1.6" fill="#d4d4d4" fill-opacity="0.32"/><rect x="4" y="234" width="6" height="1.6" fill="#9cdcfe" fill-opacity="0.42"/><rect x="10" y="234" width="1" height="1.6" fill="#d4d4d4" fill-opacity="0.32"/><rect x="12" y="234" width="16" height="1.6" fill="#ce9178" fill-opacity="0.42"/><rect x="28" y="234" width="1" height="1.6" fill="#d4d4d4" fill-opacity="0.32"/><rect x="4" y="236" width="6" height="1.6" fill="#9cdcfe" fill-opacity="0.42"/><rect x="10" y="236" width="1" height="1.6" fill="#d4d4d4" fill-opacity="0.32"/><rect x="12" y="236" width="11" height="1.6" fill="#ce9178" fill-opacity="0.42"/><rect x="23" y="236" width="1" height="1.6" fill="#d4d4d4" fill-opacity="0.32"/><rect x="4" y="238" width="5" height="1.6" fill="#9cdcfe" fill-opacity="0.42"/><rect x="9" y="238" width="1" height="1.6" fill="#d4d4d4" fill-opacity="0.32"/><rect x="11" y="238" width="6" height="1.6" fill="#ce9178" fill-opacity="0.42"/><rect x="2" y="240" width="2" height="1.6" fill="#d4d4d4" fill-opacity="0.32"/><rect x="2" y="242" width="8" height="1.6" fill="#9cdcfe" fill-opacity="0.42"/><rect x="10" y="242" width="1" height="1.6" fill="#d4d4d4" fill-opacity="0.32"/><rect x="12" y="242" width="1" height="1.6" fill="#d4d4d4" fill-opacity="0.32"/><rect x="4" y="244" width="9" height="1.6" fill="#9cdcfe" fill-opacity="0.42"/><rect x="13" y="244" width="1" height="1.6" fill="#d4d4d4" fill-opacity="0.32"/><rect x="15" y="244" width="12" height="1.6" fill="#ce9178" fill-opacity="0.42"/><rect x="27" y="244" width="1" height="1.6" fill="#d4d4d4" fill-opacity="0.32"/><rect x="4" y="246" width="6" height="1.6" fill="#9cdcfe" fill-opacity="0.42"/><rect x="10" y="246" width="1" height="1.6" fill="#d4d4d4" fill-opacity="0.32"/><rect x="12" y="246" width="13" height="1.6" fill="#ce9178" fill-opacity="0.42"/><rect x="25" y="246" width="1" height="1.6" fill="#d4d4d4" fill-opacity="0.32"/><rect x="4" y="248" width="6" height="1.6" fill="#9cdcfe" fill-opacity="0.42"/><rect x="10" y="248" width="1" height="1.6" fill="#d4d4d4" fill-opacity="0.32"/><rect x="12" y="248" width="8" height="1.6" fill="#ce9178" fill-opacity="0.42"/><rect x="20" y="248" width="1" height="1.6" fill="#d4d4d4" fill-opacity="0.32"/><rect x="4" y="250" width="5" height="1.6" fill="#9cdcfe" fill-opacity="0.42"/><rect x="9" y="250" width="1" height="1.6" fill="#d4d4d4" fill-opacity="0.32"/><rect x="11" y="250" width="6" height="1.6" fill="#ce9178" fill-opacity="0.42"/><rect x="2" y="252" width="2" height="1.6" fill="#d4d4d4" fill-opacity="0.32"/><rect x="2" y="254" width="10" height="1.6" fill="#9cdcfe" fill-opacity="0.42"/><rect x="12" y="254" width="1" height="1.6" fill="#d4d4d4" fill-opacity="0.32"/><rect x="14" y="254" width="1" height="1.6" fill="#d4d4d4" fill-opacity="0.32"/><rect x="4" y="256" width="9" height="1.6" fill="#9cdcfe" fill-opacity="0.42"/><rect x="13" y="256" width="1" height="1.6" fill="#d4d4d4" fill-opacity="0.32"/><rect x="15" y="256" width="14" height="1.6" fill="#ce9178" fill-opacity="0.42"/><rect x="29" y="256" width="1" height="1.6" fill="#d4d4d4" fill-opacity="0.32"/><rect x="4" y="258" width="6" height="1.6" fill="#9cdcfe" fill-opacity="0.42"/><rect x="10" y="258" width="1" height="1.6" fill="#d4d4d4" fill-opacity="0.32"/><rect x="12" y="258" width="15" height="1.6" fill="#ce9178" fill-opacity="0.42"/><rect x="27" y="258" width="1" height="1.6" fill="#d4d4d4" fill-opacity="0.32"/><rect x="4" y="260" width="6" height="1.6" fill="#9cdcfe" fill-opacity="0.42"/><rect x="10" y="260" width="1" height="1.6" fill="#d4d4d4" fill-opacity="0.32"/><rect x="12" y="260" width="10" height="1.6" fill="#ce9178" fill-opacity="0.42"/><rect x="22" y="260" width="1" height="1.6" fill="#d4d4d4" fill-opacity="0.32"/><rect x="4" y="262" width="5" height="1.6" fill="#9cdcfe" fill-opacity="0.42"/><rect x="9" y="262" width="1" height="1.6" fill="#d4d4d4" fill-opacity="0.32"/><rect x="11" y="262" width="6" height="1.6" fill="#ce9178" fill-opacity="0.42"/><rect x="2" y="264" width="2" height="1.6" fill="#d4d4d4" fill-opacity="0.32"/><rect x="2" y="266" width="14" height="1.6" fill="#9cdcfe" fill-opacity="0.42"/><rect x="16" y="266" width="1" height="1.6" fill="#d4d4d4" fill-opacity="0.32"/><rect x="18" y="266" width="1" height="1.6" fill="#d4d4d4" fill-opacity="0.32"/><rect x="4" y="268" width="9" height="1.6" fill="#9cdcfe" fill-opacity="0.42"/><rect x="13" y="268" width="1" height="1.6" fill="#d4d4d4" fill-opacity="0.32"/><rect x="15" y="268" width="18" height="1.6" fill="#ce9178" fill-opacity="0.42"/><rect x="33" y="268" width="1" height="1.6" fill="#d4d4d4" fill-opacity="0.32"/><rect x="4" y="270" width="6" height="1.6" fill="#9cdcfe" fill-opacity="0.42"/><rect x="10" y="270" width="1" height="1.6" fill="#d4d4d4" fill-opacity="0.32"/><rect x="12" y="270" width="14" height="1.6" fill="#ce9178" fill-opacity="0.42"/><rect x="26" y="270" width="1" height="1.6" fill="#d4d4d4" fill-opacity="0.32"/><rect x="4" y="272" width="6" height="1.6" fill="#9cdcfe" fill-opacity="0.42"/><rect x="10" y="272" width="1" height="1.6" fill="#d4d4d4" fill-opacity="0.32"/><rect x="12" y="272" width="14" height="1.6" fill="#ce9178" fill-opacity="0.42"/><rect x="26" y="272" width="1" height="1.6" fill="#d4d4d4" fill-opacity="0.32"/><rect x="4" y="274" width="5" height="1.6" fill="#9cdcfe" fill-opacity="0.42"/><rect x="9" y="274" width="1" height="1.6" fill="#d4d4d4" fill-opacity="0.32"/><rect x="11" y="274" width="14" height="1.6" fill="#ce9178" fill-opacity="0.42"/><rect x="2" y="276" width="2" height="1.6" fill="#d4d4d4" fill-opacity="0.32"/><rect x="2" y="278" width="14" height="1.6" fill="#9cdcfe" fill-opacity="0.42"/><rect x="16" y="278" width="1" height="1.6" fill="#d4d4d4" fill-opacity="0.32"/><rect x="18" y="278" width="1" height="1.6" fill="#d4d4d4" fill-opacity="0.32"/><rect x="4" y="280" width="9" height="1.6" fill="#9cdcfe" fill-opacity="0.42"/><rect x="13" y="280" width="1" height="1.6" fill="#d4d4d4" fill-opacity="0.32"/><rect x="15" y="280" width="18" height="1.6" fill="#ce9178" fill-opacity="0.42"/><rect x="33" y="280" width="1" height="1.6" fill="#d4d4d4" fill-opacity="0.32"/><rect x="4" y="282" width="6" height="1.6" fill="#9cdcfe" fill-opacity="0.42"/><rect x="10" y="282" width="1" height="1.6" fill="#d4d4d4" fill-opacity="0.32"/><rect x="12" y="282" width="23" height="1.6" fill="#ce9178" fill-opacity="0.42"/><rect x="35" y="282" width="1" height="1.6" fill="#d4d4d4" fill-opacity="0.32"/><rect x="4" y="284" width="6" height="1.6" fill="#9cdcfe" fill-opacity="0.42"/><rect x="10" y="284" width="1" height="1.6" fill="#d4d4d4" fill-opacity="0.32"/><rect x="12" y="284" width="14" height="1.6" fill="#ce9178" fill-opacity="0.42"/><rect x="26" y="284" width="1" height="1.6" fill="#d4d4d4" fill-opacity="0.32"/><rect x="4" y="286" width="5" height="1.6" fill="#9cdcfe" fill-opacity="0.42"/><rect x="9" y="286" width="1" height="1.6" fill="#d4d4d4" fill-opacity="0.32"/><rect x="11" y="286" width="14" height="1.6" fill="#ce9178" fill-opacity="0.42"/><rect x="2" y="288" width="2" height="1.6" fill="#d4d4d4" fill-opacity="0.32"/><rect x="2" y="290" width="21" height="1.6" fill="#9cdcfe" fill-opacity="0.42"/><rect x="23" y="290" width="1" height="1.6" fill="#d4d4d4" fill-opacity="0.32"/><rect x="25" y="290" width="1" height="1.6" fill="#d4d4d4" fill-opacity="0.32"/><rect x="4" y="292" width="9" height="1.6" fill="#9cdcfe" fill-opacity="0.42"/><rect x="13" y="292" width="1" height="1.6" fill="#d4d4d4" fill-opacity="0.32"/><rect x="15" y="292" width="25" height="1.6" fill="#ce9178" fill-opacity="0.42"/><rect x="40" y="292" width="1" height="1.6" fill="#d4d4d4" fill-opacity="0.32"/><rect x="4" y="294" width="6" height="1.6" fill="#9cdcfe" fill-opacity="0.42"/><rect x="10" y="294" width="1" height="1.6" fill="#d4d4d4" fill-opacity="0.32"/><rect x="12" y="294" width="46" height="1.6" fill="#ce9178" fill-opacity="0.42"/><rect x="58" y="294" width="1" height="1.6" fill="#d4d4d4" fill-opacity="0.32"/><rect x="4" y="296" width="6" height="1.6" fill="#9cdcfe" fill-opacity="0.42"/><rect x="10" y="296" width="1" height="1.6" fill="#d4d4d4" fill-opacity="0.32"/><rect x="12" y="296" width="21" height="1.6" fill="#ce9178" fill-opacity="0.42"/><rect x="33" y="296" width="1" height="1.6" fill="#d4d4d4" fill-opacity="0.32"/><rect x="4" y="298" width="5" height="1.6" fill="#9cdcfe" fill-opacity="0.42"/><rect x="9" y="298" width="1" height="1.6" fill="#d4d4d4" fill-opacity="0.32"/><rect x="11" y="298" width="12" height="1.6" fill="#ce9178" fill-opacity="0.42"/><rect x="2" y="300" width="2" height="1.6" fill="#d4d4d4" fill-opacity="0.32"/><rect x="2" y="302" width="5" height="1.6" fill="#9cdcfe" fill-opacity="0.42"/><rect x="7" y="302" width="1" height="1.6" fill="#d4d4d4" fill-opacity="0.32"/><rect x="9" y="302" width="1" height="1.6" fill="#d4d4d4" fill-opacity="0.32"/><rect x="4" y="304" width="9" height="1.6" fill="#9cdcfe" fill-opacity="0.42"/><rect x="13" y="304" width="1" height="1.6" fill="#d4d4d4" fill-opacity="0.32"/><rect x="15" y="304" width="9" height="1.6" fill="#ce9178" fill-opacity="0.42"/><rect x="24" y="304" width="1" height="1.6" fill="#d4d4d4" fill-opacity="0.32"/><rect x="4" y="306" width="6" height="1.6" fill="#9cdcfe" fill-opacity="0.42"/><rect x="10" y="306" width="1" height="1.6" fill="#d4d4d4" fill-opacity="0.32"/><rect x="12" y="306" width="5" height="1.6" fill="#ce9178" fill-opacity="0.42"/><rect x="17" y="306" width="1" height="1.6" fill="#d4d4d4" fill-opacity="0.32"/><rect x="4" y="308" width="6" height="1.6" fill="#9cdcfe" fill-opacity="0.42"/><rect x="10" y="308" width="1" height="1.6" fill="#d4d4d4" fill-opacity="0.32"/><rect x="12" y="308" width="5" height="1.6" fill="#ce9178" fill-opacity="0.42"/><rect x="17" y="308" width="1" height="1.6" fill="#d4d4d4" fill-opacity="0.32"/><rect x="4" y="310" width="5" height="1.6" fill="#9cdcfe" fill-opacity="0.42"/><rect x="9" y="310" width="1" height="1.6" fill="#d4d4d4" fill-opacity="0.32"/><rect x="11" y="310" width="5" height="1.6" fill="#ce9178" fill-opacity="0.42"/><rect x="2" y="312" width="2" height="1.6" fill="#d4d4d4" fill-opacity="0.32"/><rect x="2" y="314" width="8" height="1.6" fill="#9cdcfe" fill-opacity="0.42"/><rect x="10" y="314" width="1" height="1.6" fill="#d4d4d4" fill-opacity="0.32"/><rect x="12" y="314" width="1" height="1.6" fill="#d4d4d4" fill-opacity="0.32"/><rect x="4" y="316" width="9" height="1.6" fill="#9cdcfe" fill-opacity="0.42"/><rect x="13" y="316" width="1" height="1.6" fill="#d4d4d4" fill-opacity="0.32"/><rect x="15" y="316" width="12" height="1.6" fill="#ce9178" fill-opacity="0.42"/><rect x="27" y="316" width="1" height="1.6" fill="#d4d4d4" fill-opacity="0.32"/><rect x="4" y="318" width="6" height="1.6" fill="#9cdcfe" fill-opacity="0.42"/><rect x="10" y="318" width="1" height="1.6" fill="#d4d4d4" fill-opacity="0.32"/><rect x="12" y="318" width="13" height="1.6" fill="#ce9178" fill-opacity="0.42"/><rect x="25" y="318" width="1" height="1.6" fill="#d4d4d4" fill-opacity="0.32"/><rect x="4" y="320" width="6" height="1.6" fill="#9cdcfe" fill-opacity="0.42"/><rect x="10" y="320" width="1" height="1.6" fill="#d4d4d4" fill-opacity="0.32"/><rect x="12" y="320" width="8" height="1.6" fill="#ce9178" fill-opacity="0.42"/><rect x="20" y="320" width="1" height="1.6" fill="#d4d4d4" fill-opacity="0.32"/><rect x="4" y="322" width="5" height="1.6" fill="#9cdcfe" fill-opacity="0.42"/><rect x="9" y="322" width="1" height="1.6" fill="#d4d4d4" fill-opacity="0.32"/><rect x="11" y="322" width="6" height="1.6" fill="#ce9178" fill-opacity="0.42"/><rect x="2" y="324" width="2" height="1.6" fill="#d4d4d4" fill-opacity="0.32"/><rect x="2" y="326" width="4" height="1.6" fill="#9cdcfe" fill-opacity="0.42"/><rect x="6" y="326" width="1" height="1.6" fill="#d4d4d4" fill-opacity="0.32"/><rect x="8" y="326" width="1" height="1.6" fill="#d4d4d4" fill-opacity="0.32"/><rect x="4" y="328" width="9" height="1.6" fill="#9cdcfe" fill-opacity="0.42"/><rect x="13" y="328" width="1" height="1.6" fill="#d4d4d4" fill-opacity="0.32"/><rect x="15" y="328" width="8" height="1.6" fill="#ce9178" fill-opacity="0.42"/><rect x="23" y="328" width="1" height="1.6" fill="#d4d4d4" fill-opacity="0.32"/><rect x="4" y="330" width="6" height="1.6" fill="#9cdcfe" fill-opacity="0.42"/><rect x="10" y="330" width="1" height="1.6" fill="#d4d4d4" fill-opacity="0.32"/><rect x="12" y="330" width="15" height="1.6" fill="#ce9178" fill-opacity="0.42"/><rect x="27" y="330" width="1" height="1.6" fill="#d4d4d4" fill-opacity="0.32"/><rect x="4" y="332" width="6" height="1.6" fill="#9cdcfe" fill-opacity="0.42"/><rect x="10" y="332" width="1" height="1.6" fill="#d4d4d4" fill-opacity="0.32"/><rect x="12" y="332" width="4" height="1.6" fill="#ce9178" fill-opacity="0.42"/><rect x="16" y="332" width="1" height="1.6" fill="#d4d4d4" fill-opacity="0.32"/><rect x="4" y="334" width="5" height="1.6" fill="#9cdcfe" fill-opacity="0.42"/><rect x="9" y="334" width="1" height="1.6" fill="#d4d4d4" fill-opacity="0.32"/><rect x="11" y="334" width="12" height="1.6" fill="#ce9178" fill-opacity="0.42"/><rect x="2" y="336" width="2" height="1.6" fill="#d4d4d4" fill-opacity="0.32"/><rect x="2" y="338" width="6" height="1.6" fill="#9cdcfe" fill-opacity="0.42"/><rect x="8" y="338" width="1" height="1.6" fill="#d4d4d4" fill-opacity="0.32"/><rect x="10" y="338" width="1" height="1.6" fill="#d4d4d4" fill-opacity="0.32"/><rect x="4" y="340" width="9" height="1.6" fill="#9cdcfe" fill-opacity="0.42"/><rect x="13" y="340" width="1" height="1.6" fill="#d4d4d4" fill-opacity="0.32"/><rect x="15" y="340" width="10" height="1.6" fill="#ce9178" fill-opacity="0.42"/><rect x="25" y="340" width="1" height="1.6" fill="#d4d4d4" fill-opacity="0.32"/><rect x="4" y="342" width="6" height="1.6" fill="#9cdcfe" fill-opacity="0.42"/><rect x="10" y="342" width="1" height="1.6" fill="#d4d4d4" fill-opacity="0.32"/><rect x="12" y="342" width="6" height="1.6" fill="#ce9178" fill-opacity="0.42"/><rect x="18" y="342" width="1" height="1.6" fill="#d4d4d4" fill-opacity="0.32"/><rect x="4" y="344" width="6" height="1.6" fill="#9cdcfe" fill-opacity="0.42"/><rect x="10" y="344" width="1" height="1.6" fill="#d4d4d4" fill-opacity="0.32"/><rect x="12" y="344" width="6" height="1.6" fill="#ce9178" fill-opacity="0.42"/><rect x="18" y="344" width="1" height="1.6" fill="#d4d4d4" fill-opacity="0.32"/><rect x="4" y="346" width="5" height="1.6" fill="#9cdcfe" fill-opacity="0.42"/><rect x="9" y="346" width="1" height="1.6" fill="#d4d4d4" fill-opacity="0.32"/><rect x="11" y="346" width="6" height="1.6" fill="#ce9178" fill-opacity="0.42"/><rect x="2" y="348" width="2" height="1.6" fill="#d4d4d4" fill-opacity="0.32"/><rect x="2" y="350" width="15" height="1.6" fill="#9cdcfe" fill-opacity="0.42"/><rect x="17" y="350" width="1" height="1.6" fill="#d4d4d4" fill-opacity="0.32"/><rect x="19" y="350" width="1" height="1.6" fill="#d4d4d4" fill-opacity="0.32"/><rect x="4" y="352" width="9" height="1.6" fill="#9cdcfe" fill-opacity="0.42"/><rect x="13" y="352" width="1" height="1.6" fill="#d4d4d4" fill-opacity="0.32"/><rect x="15" y="352" width="19" height="1.6" fill="#ce9178" fill-opacity="0.42"/><rect x="34" y="352" width="1" height="1.6" fill="#d4d4d4" fill-opacity="0.32"/><rect x="4" y="354" width="6" height="1.6" fill="#9cdcfe" fill-opacity="0.42"/><rect x="10" y="354" width="1" height="1.6" fill="#d4d4d4" fill-opacity="0.32"/><rect x="12" y="354" width="26" height="1.6" fill="#ce9178" fill-opacity="0.42"/><rect x="38" y="354" width="1" height="1.6" fill="#d4d4d4" fill-opacity="0.32"/><rect x="4" y="356" width="6" height="1.6" fill="#9cdcfe" fill-opacity="0.42"/><rect x="10" y="356" width="1" height="1.6" fill="#d4d4d4" fill-opacity="0.32"/><rect x="12" y="356" width="15" height="1.6" fill="#ce9178" fill-opacity="0.42"/><rect x="27" y="356" width="1" height="1.6" fill="#d4d4d4" fill-opacity="0.32"/><rect x="4" y="358" width="5" height="1.6" fill="#9cdcfe" fill-opacity="0.42"/><rect x="9" y="358" width="1" height="1.6" fill="#d4d4d4" fill-opacity="0.32"/><rect x="11" y="358" width="12" height="1.6" fill="#ce9178" fill-opacity="0.42"/><rect x="2" y="360" width="2" height="1.6" fill="#d4d4d4" fill-opacity="0.32"/><rect x="2" y="362" width="5" height="1.6" fill="#9cdcfe" fill-opacity="0.42"/><rect x="7" y="362" width="1" height="1.6" fill="#d4d4d4" fill-opacity="0.32"/><rect x="9" y="362" width="1" height="1.6" fill="#d4d4d4" fill-opacity="0.32"/><rect x="4" y="364" width="9" height="1.6" fill="#9cdcfe" fill-opacity="0.42"/><rect x="13" y="364" width="1" height="1.6" fill="#d4d4d4" fill-opacity="0.32"/><rect x="15" y="364" width="9" height="1.6" fill="#ce9178" fill-opacity="0.42"/><rect x="24" y="364" width="1" height="1.6" fill="#d4d4d4" fill-opacity="0.32"/><rect x="4" y="366" width="5" height="1.6" fill="#9cdcfe" fill-opacity="0.42"/><rect x="9" y="366" width="1" height="1.6" fill="#d4d4d4" fill-opacity="0.32"/><rect x="11" y="366" width="6" height="1.6" fill="#ce9178" fill-opacity="0.42"/><rect x="2" y="368" width="1" height="1.6" fill="#d4d4d4" fill-opacity="0.32"/><rect x="0" y="370" width="1" height="1.6" fill="#d4d4d4" fill-opacity="0.32"/></svg>
<div class="r" style="left:1585.6px;top:505.5px;width:2.6px;height:8.7px;background:#8ba53a;"></div>
<div class="r" style="left:1704px;top:146px;width:1px;height:720px;background:#3e3e3e;"></div>
<div class="r" style="left:1704px;top:146px;width:14px;height:1px;background:#3e3e3e;"></div>
<div class="r" style="left:1704px;top:724px;width:5px;height:13.5px;background:#5e7a2a;"></div>
<div class="r" style="left:1709px;top:726px;width:5px;height:6px;background:#c8c8c8;"></div>
<div class="r" style="left:1709px;top:735px;width:5px;height:6px;background:#c8c8c8;"></div>
<div class="r" style="left:1705px;top:727px;width:13px;height:1.5px;background:#bbbbbb;"></div>
<div class="r" style="left:72px;top:866px;width:1646px;height:22px;background:#007acc;"></div>
<svg class="r" style="left:86px;top:869px;" width="16" height="16" viewBox="0 0 16 16"><circle cx="4" cy="3" r="1.8" stroke="#fff" stroke-width="1.2" fill="none"/><circle cx="4" cy="13" r="1.8" stroke="#fff" stroke-width="1.2" fill="none"/><circle cx="11.5" cy="5" r="1.8" stroke="#fff" stroke-width="1.2" fill="none"/><path d="M4 4.8 V11.2 M11.5 6.8 Q11.5 10 5.5 11.8" stroke="#fff" stroke-width="1.2" fill="none"/></svg>
<div class="t " style="left:104.3px;top:869.0px;font-size:11.7px;line-height:16px;color:#ffffff;font-weight:normal;">OpenHarmony-v3.0-LTS</div>
<svg class="r" style="left:246px;top:870px;" width="16" height="15" viewBox="0 0 16 15"><path d="M13.5 6 A6 6 0 0 0 2.5 5.5 M2.5 9 A6 6 0 0 0 13.5 9.5" stroke="#fff" stroke-width="1.3" fill="none"/><path d="M1 3 L2.5 6.5 L6 5 M15 12 L13.5 8.5 L10 10" stroke="#fff" stroke-width="1.3" fill="none"/></svg>
<svg class="r" style="left:277px;top:870px;" width="15" height="15" viewBox="0 0 15 15"><circle cx="7" cy="7.5" r="6" stroke="#fff" stroke-width="1.2" fill="none"/><path d="M4.5 5 L9.5 10 M9.5 5 L4.5 10" stroke="#fff" stroke-width="1.2"/></svg>
<div class="t " style="left:294px;top:868.5px;font-size:12px;line-height:17px;color:#ffffff;font-weight:normal;">2</div>
<svg class="r" style="left:303px;top:869px;" width="15" height="15" viewBox="0 0 15 15"><path d="M7 1.5 L13.5 13.5 H0.5 Z" stroke="#fff" stroke-width="1.2" fill="none" stroke-linejoin="round"/><path d="M7 5.5 V9.8 M7 11 V12.2" stroke="#fff" stroke-width="1.2"/></svg>
<div class="t " style="left:320px;top:868.5px;font-size:12px;line-height:17px;color:#ffffff;font-weight:normal;">0</div>
<svg class="r" style="left:343px;top:870px;" width="15" height="14" viewBox="0 0 15 14"><path d="M1.5 7.5 L7 2 L12.5 7.5 M3 6.5 V12.5 H6 V9 H8 V12.5 H11 V6.5" stroke="#fff" stroke-width="1.2" fill="none"/></svg>
<svg class="r" style="left:373px;top:869px;" width="13" height="15" viewBox="0 0 13 15"><path d="M1 3.5 H12 M4.5 3.5 V1.5 H8.5 V3.5 M2.5 3.5 L3.2 13.5 H9.8 L10.5 3.5 M5 5.5 V11.5 M6.5 5.5 V11.5 M8 5.5 V11.5" stroke="#fff" stroke-width="1.1" fill="none"/></svg>
<svg class="r" style="left:404px;top:872px;" width="11" height="10" viewBox="0 0 11 10"><circle cx="5.7" cy="5" r="3" stroke="#fff" stroke-width="1.5" fill="none"/></svg>
<svg class="r" style="left:433px;top:869px;" width="13" height="16" viewBox="0 0 13 16"><path d="M6.5 1.5 Q8 5 10.5 7.5 Q12 10 10.5 12.5 Q9 14.5 6.5 14.5 Q4 14.5 2.5 12.5 Q1 10 2.5 7.5 Q3.5 5.5 4.5 7 Q5 4 6.5 1.5 Z M6.5 8.5 Q8.5 10.5 8 12 Q7.5 13.5 6.5 13.5 Q5.5 13.5 5 12 Q4.5 10.5 6.5 8.5 Z" stroke="#fff" stroke-width="1.1" fill="none"/></svg>
<svg class="r" style="left:462px;top:869px;" width="16" height="15" viewBox="0 0 16 15"><path d="M8 1.5 L14.5 13.5 H1.5 Z" stroke="#fff" stroke-width="1.2" fill="none" stroke-linejoin="round"/><path d="M8 5.5 V9.8 M8 11 V12.2" stroke="#fff" stroke-width="1.2"/></svg>
<svg class="r" style="left:494px;top:869px;" width="12" height="16" viewBox="0 0 12 16"><path d="M3.5 1 V4.5 M8.5 1 V4.5 M1.5 4.5 H10.5 V8 Q10.5 11.5 6 11.5 Q1.5 11.5 1.5 8 Z M6 11.5 V15" stroke="#fff" stroke-width="1.2" fill="none"/></svg>
<svg class="r" style="left:523px;top:870px;" width="15" height="14" viewBox="0 0 15 14"><path d="M5 2.5 H14 M5 6 H14 M5 9.5 H14 M5 13 H14 M1 2.5 H3 M1 6 H3 M1 9.5 H3 M1 13 H3" stroke="#fff" stroke-width="1.2"/></svg>
<svg class="r" style="left:553px;top:869px;" width="14" height="15" viewBox="0 0 14 15"><rect x="1" y="1.5" width="12" height="12" stroke="#fff" stroke-width="1.2" fill="none"/><path d="M5 4.5 L8 7.5 L5 10.5" stroke="#fff" stroke-width="1.2" fill="none"/></svg>
<div class="t " style="left:583px;top:868.5px;font-size:12px;line-height:17px;color:#ffffff;font-weight:normal;">DevEco: 未登录</div>
<div class="t " style="left:1392.2px;top:868.5px;font-size:12px;line-height:17px;color:#ffffff;font-weight:normal;">行 182，列 11</div>
<div class="t " style="left:1483.9px;top:868.5px;font-size:12px;line-height:17px;color:#ffffff;font-weight:normal;">空格: 2</div>
<div class="t " style="left:1536.4px;top:869.0px;font-size:11.1px;line-height:16px;color:#ffffff;font-weight:normal;">UTF-8</div>
<div class="t " style="left:1583.6px;top:868.5px;font-size:12px;line-height:17px;color:#ffffff;font-weight:normal;">LF</div>
<div class="t " style="left:1613.1px;top:869.0px;font-size:11.1px;line-height:16px;color:#ffffff;font-weight:normal;">JSON</div>
<svg class="r" style="left:1658px;top:869px;" width="16" height="16" viewBox="0 0 16 16"><circle cx="6" cy="5" r="3.3" stroke="#fff" stroke-width="1.2" fill="none"/><path d="M1 14.5 Q1.5 9.5 6 9.5 Q8 9.5 9 10.5 M10 1.5 H14.5 V6 H12 L10.5 7.5 V6 H10 Z" stroke="#fff" stroke-width="1.2" fill="none"/></svg>
<svg class="r" style="left:1689px;top:869px;" width="16" height="16" viewBox="0 0 16 16"><path d="M7 2.5 Q3 2.5 3 7 V11 L1.5 12.5 H12.5 L11 11 V8.5 M5.5 13 Q7 15 8.5 13" stroke="#fff" stroke-width="1.2" fill="none"/><circle cx="11.5" cy="3.8" r="2.8" fill="#fff"/></svg>
<svg class="r" style="left:12px;top:37px;" width="48" height="50" viewBox="0 0 48 50"><defs>
<linearGradient id="ffo" x1="0.85" y1="0.05" x2="0.2" y2="0.95"><stop offset="0" stop-color="#fff03a"/><stop offset="0.35" stop-color="#ffb832"/><stop offset="0.6" stop-color="#ff6a35"/><stop offset="0.85" stop-color="#ff2f55"/><stop offset="1" stop-color="#e3127a"/></linearGradient>
<linearGradient id="ffp" x1="0.3" y1="0" x2="0.5" y2="1"><stop offset="0" stop-color="#b44cf6"/><stop offset="1" stop-color="#4c58dc"/></linearGradient>
</defs>
<path d="M30.4 2 C34 6 38 9.5 41 13 C45 17.5 46.5 22 46.5 27 C46.5 39 37 48.5 24.5 48.5 C12 48.5 2.5 39 2.5 27 C2.5 21 4.5 17 7 14 L10.5 9.5 L12 14 L16.2 11 L18.5 15.5 C20 14.5 22 14 23.5 13.5 C24.5 9 27 5 30.4 2 Z" fill="url(#ffo)"/>
<circle cx="23.8" cy="25" r="10" fill="url(#ffp)"/>
<path d="M7.5 19.5 C12.5 16 20 16.5 25.5 20.5 C21.5 21.5 18.5 24 17.5 28.5 C13 26.5 9 23.5 7.5 19.5 Z" fill="#ffa62e"/>
<path d="M7 14 L10.5 9.5 L12 14 L16.2 11 L18.5 15.5 C14 16 10 18 8 21 C7 18.5 6.8 16 7 14 Z" fill="#ff982e"/>
<path d="M26 16.5 L32 17.5 L34 20.5 Z" fill="#ff9a2e"/></svg>
<div class="r" style="left:14px;top:108.5px;width:44px;height:44px;background:#a8a28f;border-radius:6px;box-shadow:inset 0 0 0 1px #bdb6a4"></div>
<svg class="r" style="left:19.5px;top:116px;" width="33" height="30" viewBox="0 0 33 30"><path d="M3 1 H12.5 L15.5 4 H29.5 Q32.5 4 32.5 7 V26 Q32.5 29 29.5 29 H3.5 Q0.5 29 0.5 26 V4 Q0.5 1 3 1 Z" fill="#f7f5f2"/><path d="M3 1 H12.5 L15.5 4 V6.5 H0.5 V4 Q0.5 1 3 1 Z" fill="#dedbd6"/></svg>
<div class="r" style="left:3.5px;top:127.7px;width:6px;height:6px;background:#e95420;border-radius:50%"></div>
<div class="r" style="left:4px;top:167px;width:63.5px;height:64px;background:rgba(255,255,255,0.18);border-radius:6px"></div>
<svg class="r" style="left:14px;top:176px;" width="44" height="45" viewBox="0 0 44 45"><path d="M3.5 30.5 L31 6.5" stroke="#0a6cb5" stroke-width="6.6" stroke-linecap="round"/>
<path d="M3.8 13.5 L31 37.5" stroke="#1587d8" stroke-width="6.6" stroke-linecap="round"/>
<path d="M31 1.8 L43.4 7.8 V37 L31 43.6 Z" fill="#25a6f2"/>
<path d="M31 1.8 L33 2.8 V42.6 L31 43.6 Z" fill="#1a90e0"/></svg>
<div class="r" style="left:3.5px;top:195.6px;width:6px;height:6px;background:#e95420;border-radius:50%"></div>
<div class="r" style="left:14px;top:249px;width:44px;height:35.5px;background:#4f4f4f;border-radius:5px;box-shadow:inset 0 0 0 1px #6a6a6a"></div>
<svg class="r" style="left:18px;top:252px;" width="20" height="15" viewBox="0 0 20 15"><path d="M2.2 2.8 L8.3 5.9 L2.2 9" stroke="#fff" stroke-width="1.9" fill="none" stroke-linejoin="miter"/><rect x="9" y="10.8" width="8" height="2" fill="#fff"/></svg>
<div class="r" style="left:3.5px;top:259.4px;width:6px;height:6px;background:#e95420;border-radius:50%"></div>
<div class="r" style="left:3.5px;top:268px;width:6px;height:6px;background:#e95420;border-radius:50%"></div>
<div class="r" style="left:20.8px;top:838.6px;width:6.2px;height:6.4px;background:#f2eaf0;border-radius:1.5px"></div>
<div class="r" style="left:32.9px;top:838.6px;width:6.2px;height:6.4px;background:#f2eaf0;border-radius:1.5px"></div>
<div class="r" style="left:45.0px;top:838.6px;width:6.2px;height:6.4px;background:#f2eaf0;border-radius:1.5px"></div>
<div class="r" style="left:20.8px;top:850.7px;width:6.2px;height:6.4px;background:#f2eaf0;border-radius:1.5px"></div>
<div class="r" style="left:32.9px;top:850.7px;width:6.2px;height:6.4px;background:#f2eaf0;border-radius:1.5px"></div>
<div class="r" style="left:45.0px;top:850.7px;width:6.2px;height:6.4px;background:#f2eaf0;border-radius:1.5px"></div>
<div class="r" style="left:20.8px;top:862.8000000000001px;width:6.2px;height:6.4px;background:#f2eaf0;border-radius:1.5px"></div>
<div class="r" style="left:32.9px;top:862.8000000000001px;width:6.2px;height:6.4px;background:#f2eaf0;border-radius:1.5px"></div>
<div class="r" style="left:45.0px;top:862.8000000000001px;width:6.2px;height:6.4px;background:#f2eaf0;border-radius:1.5px"></div></body></html>
